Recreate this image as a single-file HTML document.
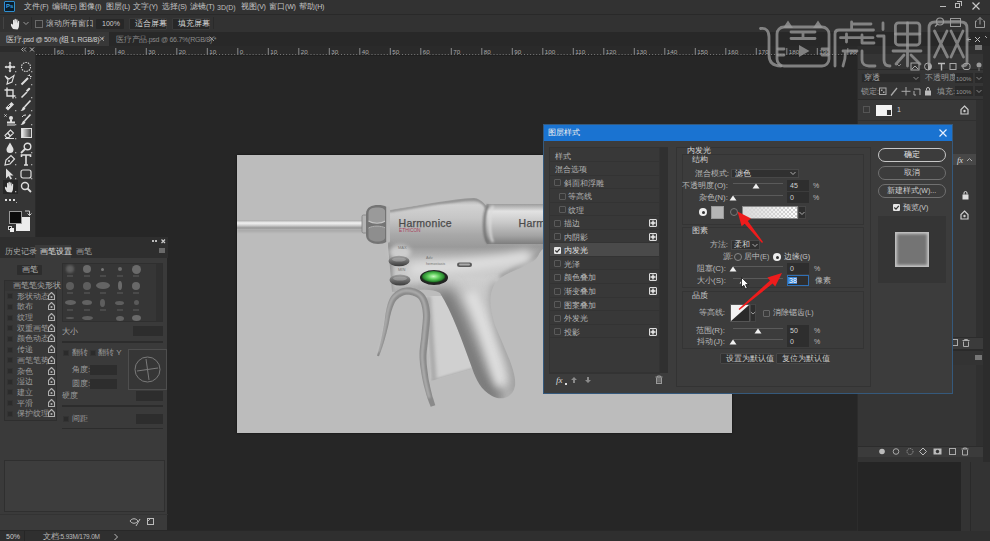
<!DOCTYPE html>
<html><head><meta charset="utf-8">
<style>
*{margin:0;padding:0;box-sizing:border-box}
html,body{width:990px;height:541px;overflow:hidden;background:#262626;font-family:"Liberation Sans",sans-serif}
.a{position:absolute}
.t{position:absolute;font-size:9px;line-height:10px;color:#bdbdbd;white-space:nowrap}
.z{letter-spacing:1.5px}
.m{font-size:8px;top:2px;color:#c4c4c4}
.mp{font-size:7px;letter-spacing:-.2px}
</style></head><body>


<!-- menu bar -->
<div class="a" style="left:0;top:0;width:990px;height:14px;background:#323232"></div>
<div class="a" style="left:4px;top:1px;width:11px;height:11px;background:#0a1d2c;border:1px solid #2f8fd0;border-radius:1px"></div>
<div class="t" style="left:6px;top:3px;font-size:6px;line-height:6px;color:#39a3e6;font-weight:bold">Ps</div>
<div class="t m" style="left:24px;top:2px">文件<span class="mp">(F)</span></div>
<div class="t m" style="left:52px;top:2px">编辑<span class="mp">(E)</span></div>
<div class="t m" style="left:79px;top:2px">图像<span class="mp">(I)</span></div>
<div class="t m" style="left:106px;top:2px">图层<span class="mp">(L)</span></div>
<div class="t m" style="left:133px;top:2px">文字<span class="mp">(Y)</span></div>
<div class="t m" style="left:162px;top:2px">选择<span class="mp">(S)</span></div>
<div class="t m" style="left:190px;top:2px">滤镜<span class="mp">(T)</span></div>
<div class="t" style="left:217px;top:3px;font-size:7px">3D(D)</div>
<div class="t m" style="left:241px;top:2px">视图<span class="mp">(V)</span></div>
<div class="t m" style="left:269px;top:2px">窗口<span class="mp">(W)</span></div>
<div class="t m" style="left:299px;top:2px">帮助<span class="mp">(H)</span></div>
<!-- window controls -->
<div class="a" style="left:940px;top:6px;width:6px;height:1px;background:#bbb"></div>
<div class="a" style="left:955px;top:3px;width:5px;height:5px;border:1px solid #bbb"></div>
<div class="a" style="left:957px;top:1px;width:5px;height:5px;border-top:1px solid #bbb;border-right:1px solid #bbb"></div>
<svg class="a" style="left:971px;top:1px" width="10" height="10"><path d="M1.5 1.5L8.5 8.5M8.5 1.5L1.5 8.5" stroke="#c8c8c8" stroke-width="1.2"/></svg>

<!-- options bar -->
<div class="a" style="left:0;top:14px;width:990px;height:18px;background:#323232;border-top:1px solid #292929"></div>
<div class="a" style="left:3px;top:17px;width:1px;height:12px;background:#444"></div>
<svg class="a" style="left:10px;top:18px" width="12" height="12" viewBox="0 0 12 12"><path d="M3 11 C1.5 9 0.5 7 1 6 C1.5 5.5 2.5 6 3 7 L3 2.5 C3 1.5 4.3 1.5 4.3 2.5 L4.3 5 L4.5 1.5 C4.5 0.5 5.9 0.5 5.9 1.5 L5.9 5 L6.2 2 C6.2 1 7.5 1 7.5 2 L7.5 5.5 L8 3.5 C8 2.6 9.2 2.6 9.2 3.5 L9 8 C8.8 10 8 11 7.5 11.5 Z" fill="#e6e6e6"/></svg>
<svg class="a" style="left:23px;top:21px" width="6" height="5"><path d="M0.5 1L3 3.5L5.5 1" stroke="#999" fill="none"/></svg>
<div class="a" style="left:31px;top:17px;width:1px;height:12px;background:#2a2a2a"></div>
<div class="a" style="left:35px;top:20px;width:8px;height:8px;border:1px solid #6a6a6a"></div>
<div class="t" style="left:46px;top:19px;font-size:8px">滚动所有窗口</div>
<div class="a" style="left:89px;top:17px;width:1px;height:12px;background:#2a2a2a"></div>
<div class="a" style="left:96px;top:19px;width:28px;height:10px;background:#272727;border-radius:1px"></div>
<div class="t" style="left:102px;top:19px;font-size:7px;color:#ccc">100%</div>
<div class="a" style="left:129px;top:18px;width:38px;height:12px;background:#272727;border:1px solid #3a3a3a;border-radius:1px"></div>
<div class="t" style="left:135px;top:19px;font-size:8px;color:#d6d6d6">适合屏幕</div>
<div class="a" style="left:172px;top:18px;width:38px;height:12px;background:#272727;border:1px solid #3a3a3a;border-radius:1px"></div>
<div class="t" style="left:178px;top:19px;font-size:8px;color:#d6d6d6">填充屏幕</div>
<div class="a" style="left:213px;top:17px;width:1px;height:12px;background:#2a2a2a"></div>
<svg class="a" style="left:934px;top:16px" width="30" height="14"><circle cx="6" cy="5.5" r="3.5" fill="none" stroke="#9a9a9a" stroke-width="1.2"/><path d="M3.5 8L1 10.5" stroke="#9a9a9a" stroke-width="1.3"/><rect x="16.5" y="2.5" width="10" height="8" fill="none" stroke="#9a9a9a"/><path d="M16.5 5H26.5" stroke="#9a9a9a"/></svg>
<svg class="a" style="left:973px;top:16px" width="14" height="13" viewBox="0 0 14 13"><path d="M4 5H2.5V11.5H11.5V5H10" stroke="#9a9a9a" fill="none"/><path d="M7 8.5V1.5M4.5 4L7 1.5L9.5 4" stroke="#9a9a9a" fill="none"/></svg>

<!-- tab bar -->
<div class="a" style="left:0;top:32px;width:990px;height:14px;background:#282828"></div>
<div class="a" style="left:0;top:32px;width:109px;height:14px;background:#383838"></div>
<div class="t" style="left:6px;top:35px;font-size:7px;color:#d0d0d0;letter-spacing:-.25px"><span style="font-size:8px">医疗</span>.psd @ 50% (<span style="font-size:8px">组</span> 1, RGB/8) *</div>
<svg class="a" style="left:98px;top:35px" width="8" height="8"><path d="M1.5 1.5L6 6M6 1.5L1.5 6" stroke="#9a9a9a"/></svg>
<div class="t" style="left:116px;top:35px;font-size:7px;color:#8a8a8a;letter-spacing:-.25px"><span style="font-size:8px">医疗产品</span>.psd @ 66.7%(RGB/8) *</div>
<svg class="a" style="left:208px;top:35px" width="8" height="8"><path d="M1.5 1.5L6 6M6 1.5L1.5 6" stroke="#9a9a9a"/></svg>
<svg class="a" style="left:966px;top:35px" width="22" height="9"><path d="M1 4.5H5M3 2.5L1 4.5L3 6.5" stroke="#aaa" fill="none"/><path d="M9 2L14 7M14 2L9 7" stroke="#bbb"/><path d="M19 1L21 3" stroke="#aaa"/></svg>
<!-- ruler -->
<div class="a" style="left:36px;top:46px;width:822px;height:10px;background:#2a2a2a;border-bottom:1px solid #1f1f1f"></div>
<svg class="a" style="left:36px;top:46px" width="822" height="10"><rect x="0.0" y="8" width="1" height="1" fill="#7a7a7a"/><rect x="3.1" y="8" width="1" height="1" fill="#7a7a7a"/><rect x="6.1" y="8" width="1" height="1" fill="#7a7a7a"/><rect x="9.2" y="8" width="1" height="1" fill="#7a7a7a"/><rect x="12.2" y="8" width="1" height="1" fill="#7a7a7a"/><rect x="15.3" y="8" width="1" height="1" fill="#7a7a7a"/><rect x="18.3" y="2" width="1" height="7" fill="#8a8a8a"/><text x="20.8" y="8" font-size="6.2" fill="#a8a8a8" font-family="Liberation Sans">60</text><rect x="21.4" y="8" width="1" height="1" fill="#7a7a7a"/><rect x="24.4" y="8" width="1" height="1" fill="#7a7a7a"/><rect x="27.5" y="8" width="1" height="1" fill="#7a7a7a"/><rect x="30.5" y="8" width="1" height="1" fill="#7a7a7a"/><rect x="33.6" y="8" width="1" height="1" fill="#7a7a7a"/><rect x="36.6" y="8" width="1" height="1" fill="#7a7a7a"/><rect x="39.7" y="8" width="1" height="1" fill="#7a7a7a"/><rect x="42.7" y="8" width="1" height="1" fill="#7a7a7a"/><rect x="45.8" y="8" width="1" height="1" fill="#7a7a7a"/><rect x="48.8" y="2" width="1" height="7" fill="#8a8a8a"/><text x="51.3" y="8" font-size="6.2" fill="#a8a8a8" font-family="Liberation Sans">50</text><rect x="51.9" y="8" width="1" height="1" fill="#7a7a7a"/><rect x="54.9" y="8" width="1" height="1" fill="#7a7a7a"/><rect x="58.0" y="8" width="1" height="1" fill="#7a7a7a"/><rect x="61.0" y="8" width="1" height="1" fill="#7a7a7a"/><rect x="64.1" y="8" width="1" height="1" fill="#7a7a7a"/><rect x="67.1" y="8" width="1" height="1" fill="#7a7a7a"/><rect x="70.2" y="8" width="1" height="1" fill="#7a7a7a"/><rect x="73.2" y="8" width="1" height="1" fill="#7a7a7a"/><rect x="76.3" y="8" width="1" height="1" fill="#7a7a7a"/><rect x="79.3" y="2" width="1" height="7" fill="#8a8a8a"/><text x="81.8" y="8" font-size="6.2" fill="#a8a8a8" font-family="Liberation Sans">40</text><rect x="82.4" y="8" width="1" height="1" fill="#7a7a7a"/><rect x="85.4" y="8" width="1" height="1" fill="#7a7a7a"/><rect x="88.5" y="8" width="1" height="1" fill="#7a7a7a"/><rect x="91.5" y="8" width="1" height="1" fill="#7a7a7a"/><rect x="94.6" y="8" width="1" height="1" fill="#7a7a7a"/><rect x="97.6" y="8" width="1" height="1" fill="#7a7a7a"/><rect x="100.7" y="8" width="1" height="1" fill="#7a7a7a"/><rect x="103.7" y="8" width="1" height="1" fill="#7a7a7a"/><rect x="106.8" y="8" width="1" height="1" fill="#7a7a7a"/><rect x="109.8" y="2" width="1" height="7" fill="#8a8a8a"/><text x="112.3" y="8" font-size="6.2" fill="#a8a8a8" font-family="Liberation Sans">30</text><rect x="112.9" y="8" width="1" height="1" fill="#7a7a7a"/><rect x="115.9" y="8" width="1" height="1" fill="#7a7a7a"/><rect x="119.0" y="8" width="1" height="1" fill="#7a7a7a"/><rect x="122.0" y="8" width="1" height="1" fill="#7a7a7a"/><rect x="125.1" y="8" width="1" height="1" fill="#7a7a7a"/><rect x="128.1" y="8" width="1" height="1" fill="#7a7a7a"/><rect x="131.2" y="8" width="1" height="1" fill="#7a7a7a"/><rect x="134.2" y="8" width="1" height="1" fill="#7a7a7a"/><rect x="137.2" y="8" width="1" height="1" fill="#7a7a7a"/><rect x="140.3" y="2" width="1" height="7" fill="#8a8a8a"/><text x="142.8" y="8" font-size="6.2" fill="#a8a8a8" font-family="Liberation Sans">20</text><rect x="143.4" y="8" width="1" height="1" fill="#7a7a7a"/><rect x="146.4" y="8" width="1" height="1" fill="#7a7a7a"/><rect x="149.5" y="8" width="1" height="1" fill="#7a7a7a"/><rect x="152.5" y="8" width="1" height="1" fill="#7a7a7a"/><rect x="155.6" y="8" width="1" height="1" fill="#7a7a7a"/><rect x="158.6" y="8" width="1" height="1" fill="#7a7a7a"/><rect x="161.7" y="8" width="1" height="1" fill="#7a7a7a"/><rect x="164.7" y="8" width="1" height="1" fill="#7a7a7a"/><rect x="167.8" y="8" width="1" height="1" fill="#7a7a7a"/><rect x="170.8" y="2" width="1" height="7" fill="#8a8a8a"/><text x="173.3" y="8" font-size="6.2" fill="#a8a8a8" font-family="Liberation Sans">10</text><rect x="173.9" y="8" width="1" height="1" fill="#7a7a7a"/><rect x="176.9" y="8" width="1" height="1" fill="#7a7a7a"/><rect x="180.0" y="8" width="1" height="1" fill="#7a7a7a"/><rect x="183.0" y="8" width="1" height="1" fill="#7a7a7a"/><rect x="186.1" y="8" width="1" height="1" fill="#7a7a7a"/><rect x="189.1" y="8" width="1" height="1" fill="#7a7a7a"/><rect x="192.2" y="8" width="1" height="1" fill="#7a7a7a"/><rect x="195.2" y="8" width="1" height="1" fill="#7a7a7a"/><rect x="198.2" y="8" width="1" height="1" fill="#7a7a7a"/><rect x="201.3" y="2" width="1" height="7" fill="#8a8a8a"/><text x="203.8" y="8" font-size="6.2" fill="#a8a8a8" font-family="Liberation Sans">0</text><rect x="204.4" y="8" width="1" height="1" fill="#7a7a7a"/><rect x="207.4" y="8" width="1" height="1" fill="#7a7a7a"/><rect x="210.5" y="8" width="1" height="1" fill="#7a7a7a"/><rect x="213.5" y="8" width="1" height="1" fill="#7a7a7a"/><rect x="216.6" y="8" width="1" height="1" fill="#7a7a7a"/><rect x="219.6" y="8" width="1" height="1" fill="#7a7a7a"/><rect x="222.7" y="8" width="1" height="1" fill="#7a7a7a"/><rect x="225.7" y="8" width="1" height="1" fill="#7a7a7a"/><rect x="228.8" y="8" width="1" height="1" fill="#7a7a7a"/><rect x="231.8" y="2" width="1" height="7" fill="#8a8a8a"/><text x="234.3" y="8" font-size="6.2" fill="#a8a8a8" font-family="Liberation Sans">10</text><rect x="234.9" y="8" width="1" height="1" fill="#7a7a7a"/><rect x="237.9" y="8" width="1" height="1" fill="#7a7a7a"/><rect x="241.0" y="8" width="1" height="1" fill="#7a7a7a"/><rect x="244.0" y="8" width="1" height="1" fill="#7a7a7a"/><rect x="247.1" y="8" width="1" height="1" fill="#7a7a7a"/><rect x="250.1" y="8" width="1" height="1" fill="#7a7a7a"/><rect x="253.2" y="8" width="1" height="1" fill="#7a7a7a"/><rect x="256.2" y="8" width="1" height="1" fill="#7a7a7a"/><rect x="259.2" y="8" width="1" height="1" fill="#7a7a7a"/><rect x="262.3" y="2" width="1" height="7" fill="#8a8a8a"/><text x="264.8" y="8" font-size="6.2" fill="#a8a8a8" font-family="Liberation Sans">20</text><rect x="265.4" y="8" width="1" height="1" fill="#7a7a7a"/><rect x="268.4" y="8" width="1" height="1" fill="#7a7a7a"/><rect x="271.4" y="8" width="1" height="1" fill="#7a7a7a"/><rect x="274.5" y="8" width="1" height="1" fill="#7a7a7a"/><rect x="277.6" y="8" width="1" height="1" fill="#7a7a7a"/><rect x="280.6" y="8" width="1" height="1" fill="#7a7a7a"/><rect x="283.7" y="8" width="1" height="1" fill="#7a7a7a"/><rect x="286.7" y="8" width="1" height="1" fill="#7a7a7a"/><rect x="289.8" y="8" width="1" height="1" fill="#7a7a7a"/><rect x="292.8" y="2" width="1" height="7" fill="#8a8a8a"/><text x="295.3" y="8" font-size="6.2" fill="#a8a8a8" font-family="Liberation Sans">30</text><rect x="295.9" y="8" width="1" height="1" fill="#7a7a7a"/><rect x="298.9" y="8" width="1" height="1" fill="#7a7a7a"/><rect x="301.9" y="8" width="1" height="1" fill="#7a7a7a"/><rect x="305.0" y="8" width="1" height="1" fill="#7a7a7a"/><rect x="308.1" y="8" width="1" height="1" fill="#7a7a7a"/><rect x="311.1" y="8" width="1" height="1" fill="#7a7a7a"/><rect x="314.2" y="8" width="1" height="1" fill="#7a7a7a"/><rect x="317.2" y="8" width="1" height="1" fill="#7a7a7a"/><rect x="320.2" y="8" width="1" height="1" fill="#7a7a7a"/><rect x="323.3" y="2" width="1" height="7" fill="#8a8a8a"/><text x="325.8" y="8" font-size="6.2" fill="#a8a8a8" font-family="Liberation Sans">40</text><rect x="326.4" y="8" width="1" height="1" fill="#7a7a7a"/><rect x="329.4" y="8" width="1" height="1" fill="#7a7a7a"/><rect x="332.4" y="8" width="1" height="1" fill="#7a7a7a"/><rect x="335.5" y="8" width="1" height="1" fill="#7a7a7a"/><rect x="338.6" y="8" width="1" height="1" fill="#7a7a7a"/><rect x="341.6" y="8" width="1" height="1" fill="#7a7a7a"/><rect x="344.7" y="8" width="1" height="1" fill="#7a7a7a"/><rect x="347.7" y="8" width="1" height="1" fill="#7a7a7a"/><rect x="350.8" y="8" width="1" height="1" fill="#7a7a7a"/><rect x="353.8" y="2" width="1" height="7" fill="#8a8a8a"/><text x="356.3" y="8" font-size="6.2" fill="#a8a8a8" font-family="Liberation Sans">50</text><rect x="356.9" y="8" width="1" height="1" fill="#7a7a7a"/><rect x="359.9" y="8" width="1" height="1" fill="#7a7a7a"/><rect x="362.9" y="8" width="1" height="1" fill="#7a7a7a"/><rect x="366.0" y="8" width="1" height="1" fill="#7a7a7a"/><rect x="369.1" y="8" width="1" height="1" fill="#7a7a7a"/><rect x="372.1" y="8" width="1" height="1" fill="#7a7a7a"/><rect x="375.2" y="8" width="1" height="1" fill="#7a7a7a"/><rect x="378.2" y="8" width="1" height="1" fill="#7a7a7a"/><rect x="381.2" y="8" width="1" height="1" fill="#7a7a7a"/><rect x="384.3" y="2" width="1" height="7" fill="#8a8a8a"/><text x="386.8" y="8" font-size="6.2" fill="#a8a8a8" font-family="Liberation Sans">60</text><rect x="387.4" y="8" width="1" height="1" fill="#7a7a7a"/><rect x="390.4" y="8" width="1" height="1" fill="#7a7a7a"/><rect x="393.4" y="8" width="1" height="1" fill="#7a7a7a"/><rect x="396.5" y="8" width="1" height="1" fill="#7a7a7a"/><rect x="399.6" y="8" width="1" height="1" fill="#7a7a7a"/><rect x="402.6" y="8" width="1" height="1" fill="#7a7a7a"/><rect x="405.7" y="8" width="1" height="1" fill="#7a7a7a"/><rect x="408.7" y="8" width="1" height="1" fill="#7a7a7a"/><rect x="411.8" y="8" width="1" height="1" fill="#7a7a7a"/><rect x="414.8" y="2" width="1" height="7" fill="#8a8a8a"/><text x="417.3" y="8" font-size="6.2" fill="#a8a8a8" font-family="Liberation Sans">70</text><rect x="417.9" y="8" width="1" height="1" fill="#7a7a7a"/><rect x="420.9" y="8" width="1" height="1" fill="#7a7a7a"/><rect x="423.9" y="8" width="1" height="1" fill="#7a7a7a"/><rect x="427.0" y="8" width="1" height="1" fill="#7a7a7a"/><rect x="430.1" y="8" width="1" height="1" fill="#7a7a7a"/><rect x="433.1" y="8" width="1" height="1" fill="#7a7a7a"/><rect x="436.2" y="8" width="1" height="1" fill="#7a7a7a"/><rect x="439.2" y="8" width="1" height="1" fill="#7a7a7a"/><rect x="442.2" y="8" width="1" height="1" fill="#7a7a7a"/><rect x="445.3" y="2" width="1" height="7" fill="#8a8a8a"/><text x="447.8" y="8" font-size="6.2" fill="#a8a8a8" font-family="Liberation Sans">80</text><rect x="448.4" y="8" width="1" height="1" fill="#7a7a7a"/><rect x="451.4" y="8" width="1" height="1" fill="#7a7a7a"/><rect x="454.4" y="8" width="1" height="1" fill="#7a7a7a"/><rect x="457.5" y="8" width="1" height="1" fill="#7a7a7a"/><rect x="460.6" y="8" width="1" height="1" fill="#7a7a7a"/><rect x="463.6" y="8" width="1" height="1" fill="#7a7a7a"/><rect x="466.7" y="8" width="1" height="1" fill="#7a7a7a"/><rect x="469.7" y="8" width="1" height="1" fill="#7a7a7a"/><rect x="472.8" y="8" width="1" height="1" fill="#7a7a7a"/><rect x="475.8" y="2" width="1" height="7" fill="#8a8a8a"/><text x="478.3" y="8" font-size="6.2" fill="#a8a8a8" font-family="Liberation Sans">90</text><rect x="478.9" y="8" width="1" height="1" fill="#7a7a7a"/><rect x="481.9" y="8" width="1" height="1" fill="#7a7a7a"/><rect x="484.9" y="8" width="1" height="1" fill="#7a7a7a"/><rect x="488.0" y="8" width="1" height="1" fill="#7a7a7a"/><rect x="491.1" y="8" width="1" height="1" fill="#7a7a7a"/><rect x="494.1" y="8" width="1" height="1" fill="#7a7a7a"/><rect x="497.2" y="8" width="1" height="1" fill="#7a7a7a"/><rect x="500.2" y="8" width="1" height="1" fill="#7a7a7a"/><rect x="503.2" y="8" width="1" height="1" fill="#7a7a7a"/><rect x="506.3" y="2" width="1" height="7" fill="#8a8a8a"/><text x="508.8" y="8" font-size="6.2" fill="#a8a8a8" font-family="Liberation Sans">100</text><rect x="509.3" y="8" width="1" height="1" fill="#7a7a7a"/><rect x="512.4" y="8" width="1" height="1" fill="#7a7a7a"/><rect x="515.4" y="8" width="1" height="1" fill="#7a7a7a"/><rect x="518.5" y="8" width="1" height="1" fill="#7a7a7a"/><rect x="521.5" y="8" width="1" height="1" fill="#7a7a7a"/><rect x="524.6" y="8" width="1" height="1" fill="#7a7a7a"/><rect x="527.6" y="8" width="1" height="1" fill="#7a7a7a"/><rect x="530.7" y="8" width="1" height="1" fill="#7a7a7a"/><rect x="533.8" y="8" width="1" height="1" fill="#7a7a7a"/><rect x="536.8" y="2" width="1" height="7" fill="#8a8a8a"/><text x="539.3" y="8" font-size="6.2" fill="#a8a8a8" font-family="Liberation Sans">110</text><rect x="539.8" y="8" width="1" height="1" fill="#7a7a7a"/><rect x="542.9" y="8" width="1" height="1" fill="#7a7a7a"/><rect x="545.9" y="8" width="1" height="1" fill="#7a7a7a"/><rect x="549.0" y="8" width="1" height="1" fill="#7a7a7a"/><rect x="552.0" y="8" width="1" height="1" fill="#7a7a7a"/><rect x="555.1" y="8" width="1" height="1" fill="#7a7a7a"/><rect x="558.1" y="8" width="1" height="1" fill="#7a7a7a"/><rect x="561.2" y="8" width="1" height="1" fill="#7a7a7a"/><rect x="564.2" y="8" width="1" height="1" fill="#7a7a7a"/><rect x="567.3" y="2" width="1" height="7" fill="#8a8a8a"/><text x="569.8" y="8" font-size="6.2" fill="#a8a8a8" font-family="Liberation Sans">120</text><rect x="570.3" y="8" width="1" height="1" fill="#7a7a7a"/><rect x="573.4" y="8" width="1" height="1" fill="#7a7a7a"/><rect x="576.4" y="8" width="1" height="1" fill="#7a7a7a"/><rect x="579.5" y="8" width="1" height="1" fill="#7a7a7a"/><rect x="582.5" y="8" width="1" height="1" fill="#7a7a7a"/><rect x="585.6" y="8" width="1" height="1" fill="#7a7a7a"/><rect x="588.6" y="8" width="1" height="1" fill="#7a7a7a"/><rect x="591.7" y="8" width="1" height="1" fill="#7a7a7a"/><rect x="594.8" y="8" width="1" height="1" fill="#7a7a7a"/><rect x="597.8" y="2" width="1" height="7" fill="#8a8a8a"/><text x="600.3" y="8" font-size="6.2" fill="#a8a8a8" font-family="Liberation Sans">130</text><rect x="600.8" y="8" width="1" height="1" fill="#7a7a7a"/><rect x="603.9" y="8" width="1" height="1" fill="#7a7a7a"/><rect x="606.9" y="8" width="1" height="1" fill="#7a7a7a"/><rect x="610.0" y="8" width="1" height="1" fill="#7a7a7a"/><rect x="613.0" y="8" width="1" height="1" fill="#7a7a7a"/><rect x="616.1" y="8" width="1" height="1" fill="#7a7a7a"/><rect x="619.1" y="8" width="1" height="1" fill="#7a7a7a"/><rect x="622.2" y="8" width="1" height="1" fill="#7a7a7a"/><rect x="625.2" y="8" width="1" height="1" fill="#7a7a7a"/><rect x="628.3" y="2" width="1" height="7" fill="#8a8a8a"/><text x="630.8" y="8" font-size="6.2" fill="#a8a8a8" font-family="Liberation Sans">140</text><rect x="631.3" y="8" width="1" height="1" fill="#7a7a7a"/><rect x="634.4" y="8" width="1" height="1" fill="#7a7a7a"/><rect x="637.4" y="8" width="1" height="1" fill="#7a7a7a"/><rect x="640.5" y="8" width="1" height="1" fill="#7a7a7a"/><rect x="643.5" y="8" width="1" height="1" fill="#7a7a7a"/><rect x="646.6" y="8" width="1" height="1" fill="#7a7a7a"/><rect x="649.6" y="8" width="1" height="1" fill="#7a7a7a"/><rect x="652.7" y="8" width="1" height="1" fill="#7a7a7a"/><rect x="655.8" y="8" width="1" height="1" fill="#7a7a7a"/><rect x="658.8" y="2" width="1" height="7" fill="#8a8a8a"/><text x="661.3" y="8" font-size="6.2" fill="#a8a8a8" font-family="Liberation Sans">150</text><rect x="661.8" y="8" width="1" height="1" fill="#7a7a7a"/><rect x="664.9" y="8" width="1" height="1" fill="#7a7a7a"/><rect x="667.9" y="8" width="1" height="1" fill="#7a7a7a"/><rect x="671.0" y="8" width="1" height="1" fill="#7a7a7a"/><rect x="674.0" y="8" width="1" height="1" fill="#7a7a7a"/><rect x="677.1" y="8" width="1" height="1" fill="#7a7a7a"/><rect x="680.1" y="8" width="1" height="1" fill="#7a7a7a"/><rect x="683.2" y="8" width="1" height="1" fill="#7a7a7a"/><rect x="686.2" y="8" width="1" height="1" fill="#7a7a7a"/><rect x="689.3" y="2" width="1" height="7" fill="#8a8a8a"/><text x="691.8" y="8" font-size="6.2" fill="#a8a8a8" font-family="Liberation Sans">160</text><rect x="692.3" y="8" width="1" height="1" fill="#7a7a7a"/><rect x="695.4" y="8" width="1" height="1" fill="#7a7a7a"/><rect x="698.4" y="8" width="1" height="1" fill="#7a7a7a"/><rect x="701.5" y="8" width="1" height="1" fill="#7a7a7a"/><rect x="704.5" y="8" width="1" height="1" fill="#7a7a7a"/><rect x="707.6" y="8" width="1" height="1" fill="#7a7a7a"/><rect x="710.6" y="8" width="1" height="1" fill="#7a7a7a"/><rect x="713.7" y="8" width="1" height="1" fill="#7a7a7a"/><rect x="716.8" y="8" width="1" height="1" fill="#7a7a7a"/><rect x="719.8" y="2" width="1" height="7" fill="#8a8a8a"/><text x="722.3" y="8" font-size="6.2" fill="#a8a8a8" font-family="Liberation Sans">170</text><rect x="722.8" y="8" width="1" height="1" fill="#7a7a7a"/><rect x="725.9" y="8" width="1" height="1" fill="#7a7a7a"/><rect x="728.9" y="8" width="1" height="1" fill="#7a7a7a"/><rect x="732.0" y="8" width="1" height="1" fill="#7a7a7a"/><rect x="735.0" y="8" width="1" height="1" fill="#7a7a7a"/><rect x="738.1" y="8" width="1" height="1" fill="#7a7a7a"/><rect x="741.1" y="8" width="1" height="1" fill="#7a7a7a"/><rect x="744.2" y="8" width="1" height="1" fill="#7a7a7a"/><rect x="747.2" y="8" width="1" height="1" fill="#7a7a7a"/><rect x="750.3" y="2" width="1" height="7" fill="#8a8a8a"/><text x="752.8" y="8" font-size="6.2" fill="#a8a8a8" font-family="Liberation Sans">180</text><rect x="753.3" y="8" width="1" height="1" fill="#7a7a7a"/><rect x="756.4" y="8" width="1" height="1" fill="#7a7a7a"/><rect x="759.4" y="8" width="1" height="1" fill="#7a7a7a"/><rect x="762.5" y="8" width="1" height="1" fill="#7a7a7a"/><rect x="765.5" y="8" width="1" height="1" fill="#7a7a7a"/><rect x="768.6" y="8" width="1" height="1" fill="#7a7a7a"/><rect x="771.6" y="8" width="1" height="1" fill="#7a7a7a"/><rect x="774.7" y="8" width="1" height="1" fill="#7a7a7a"/><rect x="777.8" y="8" width="1" height="1" fill="#7a7a7a"/><rect x="780.8" y="2" width="1" height="7" fill="#8a8a8a"/><text x="783.3" y="8" font-size="6.2" fill="#a8a8a8" font-family="Liberation Sans">190</text><rect x="783.8" y="8" width="1" height="1" fill="#7a7a7a"/><rect x="786.9" y="8" width="1" height="1" fill="#7a7a7a"/><rect x="789.9" y="8" width="1" height="1" fill="#7a7a7a"/><rect x="793.0" y="8" width="1" height="1" fill="#7a7a7a"/><rect x="796.0" y="8" width="1" height="1" fill="#7a7a7a"/><rect x="799.1" y="8" width="1" height="1" fill="#7a7a7a"/><rect x="802.1" y="8" width="1" height="1" fill="#7a7a7a"/><rect x="805.2" y="8" width="1" height="1" fill="#7a7a7a"/><rect x="808.2" y="8" width="1" height="1" fill="#7a7a7a"/><rect x="811.3" y="2" width="1" height="7" fill="#8a8a8a"/><text x="813.8" y="8" font-size="6.2" fill="#a8a8a8" font-family="Liberation Sans">200</text><rect x="814.3" y="8" width="1" height="1" fill="#7a7a7a"/><rect x="817.4" y="8" width="1" height="1" fill="#7a7a7a"/><rect x="820.4" y="8" width="1" height="1" fill="#7a7a7a"/></svg>
<!-- toolbar -->
<div class="a" style="left:0;top:46px;width:36px;height:191px;background:#353535;border-right:1px solid #2a2a2a"></div>
<div class="a" style="left:0;top:46px;width:36px;height:6px;background:#2c2c2c"></div>
<svg class="a" style="left:20px;top:46px" width="16" height="7"><path d="M3.5 1.5L1.5 3.5L3.5 5.5M6 1.5L4 3.5L6 5.5" stroke="#aaa" fill="none"/><path d="M10 1.5L14 5.5M14 1.5L10 5.5" stroke="#bbb"/></svg>
<svg class="a" style="left:4px;top:61px" width="14" height="13" viewBox="0 0 14 13"><path d="M6 1.5V10.5M1.5 6H10.5" stroke="#dedede" stroke-width="1.3"/><circle cx="6" cy="6" r="1.8" fill="#dedede"/><path d="M6 0.5L4.5 2.5H7.5ZM6 11.5L4.5 9.5H7.5ZM0.5 6L2.5 4.5V7.5ZM11.5 6L9.5 4.5V7.5Z" fill="#dedede"/><rect x="11" y="10" width="1.3" height="1.3" fill="#aaa"/></svg>
<svg class="a" style="left:20px;top:61px" width="14" height="13" viewBox="0 0 14 13"><circle cx="6" cy="6" r="4.5" stroke="#dedede" stroke-width="1.1" stroke-dasharray="1.5 1" fill="none"/><rect x="11" y="10" width="1.3" height="1.3" fill="#aaa"/></svg>
<svg class="a" style="left:4px;top:74px" width="14" height="13" viewBox="0 0 14 13"><path d="M1 2L5 5L10 1.5L8 8L3 10L4 6Z" stroke="#dedede" stroke-width="1.1" fill="none"/><rect x="11" y="10" width="1.3" height="1.3" fill="#aaa"/></svg>
<svg class="a" style="left:20px;top:74px" width="14" height="13" viewBox="0 0 14 13"><path d="M1.5 10.5L8 4" stroke="#dedede" stroke-width="2"/><path d="M9.5 0.5V2M11.5 2.5H10M8 1L8.5 2M11 4.5L10 4" stroke="#dedede"/><rect x="11" y="10" width="1.3" height="1.3" fill="#aaa"/></svg>
<svg class="a" style="left:4px;top:87px" width="14" height="13" viewBox="0 0 14 13"><path d="M3 0.5V9H11.5M0.5 3H9V11.5" stroke="#dedede" stroke-width="1.4" fill="none"/><rect x="11" y="10" width="1.3" height="1.3" fill="#aaa"/></svg>
<svg class="a" style="left:20px;top:87px" width="14" height="13" viewBox="0 0 14 13"><path d="M1.5 10.5L7 5" stroke="#dedede" stroke-width="1.6"/><path d="M6 3.5L8.5 1C9.5 0 11 1.5 10 2.5L7.5 5Z" fill="#dedede"/><rect x="11" y="10" width="1.3" height="1.3" fill="#aaa"/></svg>
<svg class="a" style="left:4px;top:100px" width="14" height="13" viewBox="0 0 14 13"><path d="M1.5 8L7.5 2L10 4.5L4 10.5Z" fill="#dedede"/><path d="M4 7L6 5" stroke="#333"/><rect x="11" y="10" width="1.3" height="1.3" fill="#aaa"/></svg>
<svg class="a" style="left:20px;top:100px" width="14" height="13" viewBox="0 0 14 13"><path d="M10.5 0.5L4.5 7" stroke="#dedede" stroke-width="1.6"/><path d="M4 6.5C2 7 2.5 9.5 0.5 11C3 11 5 10 5.5 8Z" fill="#dedede"/><rect x="11" y="10" width="1.3" height="1.3" fill="#aaa"/></svg>
<svg class="a" style="left:4px;top:114px" width="14" height="13" viewBox="0 0 14 13"><path d="M0.5 0.5L2.5 2.5M2.5 0.5L0.5 2.5" stroke="#dedede"/><circle cx="7" cy="4" r="2" fill="#dedede"/><path d="M6 5.5H8V7.5H11V9.5H3V7.5H6Z" fill="#dedede"/><rect x="3" y="10.5" width="8" height="1" fill="#dedede"/><rect x="11" y="10" width="1.3" height="1.3" fill="#aaa"/></svg>
<svg class="a" style="left:20px;top:114px" width="14" height="13" viewBox="0 0 14 13"><path d="M10.5 0.5L4.5 7" stroke="#dedede" stroke-width="1.6"/><path d="M4 6.5C2 7 2.5 9.5 0.5 11C3 11 5 10 5.5 8Z" fill="#dedede"/><path d="M2 3A4 4 0 0 1 6 1" stroke="#dedede" fill="none"/><rect x="11" y="10" width="1.3" height="1.3" fill="#aaa"/></svg>
<svg class="a" style="left:4px;top:128px" width="14" height="13" viewBox="0 0 14 13"><path d="M1 7.5L6.5 2L9.5 5L5 9.5H2.5Z" stroke="#dedede" stroke-width="1.1" fill="none"/><path d="M1 10.5H10" stroke="#dedede"/><path d="M3.5 5L6.5 8" stroke="#dedede" stroke-width="1.5"/><rect x="11" y="10" width="1.3" height="1.3" fill="#aaa"/></svg>
<div class="a" style="left:21px;top:128px;width:11px;height:10px;border:1px solid #ddd;background:linear-gradient(90deg,#eee,#444)"></div>
<svg class="a" style="left:4px;top:142px" width="14" height="13" viewBox="0 0 14 13"><path d="M6 0.5C4.5 3.5 2.5 5.5 2.5 7.5A3.5 3.5 0 0 0 9.5 7.5C9.5 5.5 7.5 3.5 6 0.5Z" fill="#dedede"/><rect x="11" y="10" width="1.3" height="1.3" fill="#aaa"/></svg>
<svg class="a" style="left:20px;top:142px" width="14" height="13" viewBox="0 0 14 13"><circle cx="7.5" cy="4.5" r="3.3" fill="none" stroke="#dedede" stroke-width="1.4"/><path d="M5 7L1 11" stroke="#dedede" stroke-width="1.8"/><rect x="11" y="10" width="1.3" height="1.3" fill="#aaa"/></svg>
<svg class="a" style="left:4px;top:154px" width="14" height="13" viewBox="0 0 14 13"><path d="M1 11L2 6L7 1.5L10.5 5L6 10Z" stroke="#dedede" stroke-width="1.2" fill="none"/><circle cx="5" cy="7" r="1" fill="#dedede"/><rect x="11" y="10" width="1.3" height="1.3" fill="#aaa"/></svg>
<svg class="a" style="left:20px;top:154px" width="14" height="13" viewBox="0 0 14 13"><path d="M1.5 3V1H10.5V3M6 1V11M4 11H8" stroke="#dedede" stroke-width="1.6" fill="none"/><rect x="11" y="10" width="1.3" height="1.3" fill="#aaa"/></svg>
<svg class="a" style="left:4px;top:168px" width="14" height="13" viewBox="0 0 14 13"><path d="M2 0.5V10.5L4.5 8L6.5 11.5L8 10.5L6 7.5H9.5Z" fill="#dedede"/><rect x="11" y="10" width="1.3" height="1.3" fill="#aaa"/></svg>
<svg class="a" style="left:20px;top:168px" width="14" height="13" viewBox="0 0 14 13"><rect x="1" y="2" width="10" height="8" rx="2" fill="none" stroke="#dedede" stroke-width="1.2"/><rect x="11" y="10" width="1.3" height="1.3" fill="#aaa"/></svg>
<div class="a" style="left:3px;top:180px;width:15px;height:14px;background:#262626"></div>
<svg class="a" style="left:4px;top:181px" width="14" height="13" viewBox="0 0 14 13"><path d="M3 11 C1.5 9 0.5 7 1 6 C1.5 5.5 2.5 6 3 7 L3 2.5 C3 1.5 4.3 1.5 4.3 2.5 L4.3 5 L4.5 1.5 C4.5 0.5 5.9 0.5 5.9 1.5 L5.9 5 L6.2 2 C6.2 1 7.5 1 7.5 2 L7.5 5.5 L8 3.5 C8 2.6 9.2 2.6 9.2 3.5 L9 8 C8.8 10 8 11 7.5 11.5 Z" fill="#dedede"/><rect x="11" y="10" width="1.3" height="1.3" fill="#aaa"/></svg>
<svg class="a" style="left:20px;top:181px" width="14" height="13" viewBox="0 0 14 13"><circle cx="5" cy="5" r="3.5" fill="none" stroke="#dedede" stroke-width="1.4"/><path d="M7.5 7.5L11 11" stroke="#dedede" stroke-width="1.8"/></svg>
<div class="a" style="left:5px;top:199px;width:2px;height:2px;background:#ddd"></div><div class="a" style="left:9px;top:199px;width:2px;height:2px;background:#ddd"></div><div class="a" style="left:13px;top:199px;width:2px;height:2px;background:#ddd"></div><div class="a" style="left:16px;top:202px;width:1px;height:1px;background:#aaa"></div>
<div class="a" style="left:16px;top:217px;width:14px;height:14px;background:#ececec"></div>
<div class="a" style="left:9px;top:211px;width:13px;height:13px;background:#0c0c0c;border:1px solid #9a9a9a"></div>
<svg class="a" style="left:24px;top:209px" width="8" height="8"><path d="M1 2H5.5V6.5M3.5 4.5L5.5 6.5L7.5 4.5" stroke="#ccc" fill="none"/></svg>
<div class="a" style="left:8px;top:226px;width:4px;height:4px;background:#111;border:1px solid #ccc"></div>
<div class="a" style="left:10px;top:228px;width:4px;height:4px;background:#eee"></div>
<!-- brush panel -->
<div class="a" style="left:0;top:237px;width:168px;height:293px;background:#3a3a3a;border-right:1px solid #262626"></div>
<div class="a" style="left:0;top:237px;width:168px;height:21px;background:#2e2e2e"></div>
<svg class="a" style="left:150px;top:238px" width="18" height="7"><rect x="2" y="2" width="2" height="2" fill="#bbb"/><rect x="5" y="2" width="2" height="2" fill="#bbb"/><path d="M11.5 1.5L15 5M15 1.5L11.5 5" stroke="#ccc" stroke-width="1.2"/></svg>
<div class="a" style="left:35px;top:245px;width:36px;height:13px;background:#3a3a3a"></div>
<div class="t" style="left:5px;top:247px;font-size:8px;color:#aaa">历史记录</div>
<div class="t" style="left:40px;top:247px;font-size:8px;color:#e0e0e0">画笔设置</div>
<div class="t" style="left:76px;top:247px;font-size:8px;color:#aaa">画笔</div>
<div class="a" style="left:159px;top:248px;width:6px;height:5px;background:#6a6a6a"></div>
<div class="a" style="left:17px;top:265px;width:25px;height:10px;background:#2d2d2d;border-radius:1px"></div>
<div class="t" style="left:22px;top:265px;font-size:8px;color:#bbb">画笔</div>
<div class="a" style="left:4px;top:280px;width:53px;height:141px;background:#383838;border:1px solid #2e2e2e"></div>
<div class="a" style="left:5px;top:281px;width:51px;height:10px;background:#343434"></div>
<div class="t" style="left:13px;top:281px;font-size:8px;color:#aaa">画笔笔尖形状</div>
<div class="a" style="left:7px;top:293.1px;width:6px;height:6px;background:#2b2b2b;border:1px solid #333"></div>
<div class="t" style="left:17px;top:291.6px;font-size:8px;color:#9c9c9c">形状动态</div>
<svg class="a" style="left:48px;top:291.6px" width="7" height="8"><path d="M3.5 0.5L6.5 3.5V7.5H0.5V3.5Z" fill="none" stroke="#b0b0b0" stroke-width="1.1" stroke-linejoin="round"/><circle cx="3.5" cy="5" r="1.1" fill="#b0b0b0"/></svg>
<div class="a" style="left:7px;top:303.8px;width:6px;height:6px;background:#2b2b2b;border:1px solid #333"></div>
<div class="t" style="left:17px;top:302.3px;font-size:8px;color:#9c9c9c">散布</div>
<svg class="a" style="left:48px;top:302.3px" width="7" height="8"><path d="M3.5 0.5L6.5 3.5V7.5H0.5V3.5Z" fill="none" stroke="#b0b0b0" stroke-width="1.1" stroke-linejoin="round"/><circle cx="3.5" cy="5" r="1.1" fill="#b0b0b0"/></svg>
<div class="a" style="left:7px;top:314.5px;width:6px;height:6px;background:#2b2b2b;border:1px solid #333"></div>
<div class="t" style="left:17px;top:313.0px;font-size:8px;color:#9c9c9c">纹理</div>
<svg class="a" style="left:48px;top:313.0px" width="7" height="8"><path d="M3.5 0.5L6.5 3.5V7.5H0.5V3.5Z" fill="none" stroke="#b0b0b0" stroke-width="1.1" stroke-linejoin="round"/><circle cx="3.5" cy="5" r="1.1" fill="#b0b0b0"/></svg>
<div class="a" style="left:7px;top:325.2px;width:6px;height:6px;background:#2b2b2b;border:1px solid #333"></div>
<div class="t" style="left:17px;top:323.7px;font-size:8px;color:#9c9c9c">双重画笔</div>
<svg class="a" style="left:48px;top:323.7px" width="7" height="8"><path d="M3.5 0.5L6.5 3.5V7.5H0.5V3.5Z" fill="none" stroke="#b0b0b0" stroke-width="1.1" stroke-linejoin="round"/><circle cx="3.5" cy="5" r="1.1" fill="#b0b0b0"/></svg>
<div class="a" style="left:7px;top:335.9px;width:6px;height:6px;background:#2b2b2b;border:1px solid #333"></div>
<div class="t" style="left:17px;top:334.4px;font-size:8px;color:#9c9c9c">颜色动态</div>
<svg class="a" style="left:48px;top:334.4px" width="7" height="8"><path d="M3.5 0.5L6.5 3.5V7.5H0.5V3.5Z" fill="none" stroke="#b0b0b0" stroke-width="1.1" stroke-linejoin="round"/><circle cx="3.5" cy="5" r="1.1" fill="#b0b0b0"/></svg>
<div class="a" style="left:7px;top:346.6px;width:6px;height:6px;background:#2b2b2b;border:1px solid #333"></div>
<div class="t" style="left:17px;top:345.1px;font-size:8px;color:#9c9c9c">传递</div>
<svg class="a" style="left:48px;top:345.1px" width="7" height="8"><path d="M3.5 0.5L6.5 3.5V7.5H0.5V3.5Z" fill="none" stroke="#b0b0b0" stroke-width="1.1" stroke-linejoin="round"/><circle cx="3.5" cy="5" r="1.1" fill="#b0b0b0"/></svg>
<div class="a" style="left:7px;top:357.3px;width:6px;height:6px;background:#2b2b2b;border:1px solid #333"></div>
<div class="t" style="left:17px;top:355.8px;font-size:8px;color:#9c9c9c">画笔笔势</div>
<svg class="a" style="left:48px;top:355.8px" width="7" height="8"><path d="M3.5 0.5L6.5 3.5V7.5H0.5V3.5Z" fill="none" stroke="#b0b0b0" stroke-width="1.1" stroke-linejoin="round"/><circle cx="3.5" cy="5" r="1.1" fill="#b0b0b0"/></svg>
<div class="a" style="left:7px;top:368.0px;width:6px;height:6px;background:#2b2b2b;border:1px solid #333"></div>
<div class="t" style="left:17px;top:366.5px;font-size:8px;color:#9c9c9c">杂色</div>
<svg class="a" style="left:48px;top:366.5px" width="7" height="8"><path d="M3.5 0.5L6.5 3.5V7.5H0.5V3.5Z" fill="none" stroke="#b0b0b0" stroke-width="1.1" stroke-linejoin="round"/><circle cx="3.5" cy="5" r="1.1" fill="#b0b0b0"/></svg>
<div class="a" style="left:7px;top:378.7px;width:6px;height:6px;background:#2b2b2b;border:1px solid #333"></div>
<div class="t" style="left:17px;top:377.2px;font-size:8px;color:#9c9c9c">湿边</div>
<svg class="a" style="left:48px;top:377.2px" width="7" height="8"><path d="M3.5 0.5L6.5 3.5V7.5H0.5V3.5Z" fill="none" stroke="#b0b0b0" stroke-width="1.1" stroke-linejoin="round"/><circle cx="3.5" cy="5" r="1.1" fill="#b0b0b0"/></svg>
<div class="a" style="left:7px;top:389.4px;width:6px;height:6px;background:#2b2b2b;border:1px solid #333"></div>
<div class="t" style="left:17px;top:387.9px;font-size:8px;color:#9c9c9c">建立</div>
<svg class="a" style="left:48px;top:387.9px" width="7" height="8"><path d="M3.5 0.5L6.5 3.5V7.5H0.5V3.5Z" fill="none" stroke="#b0b0b0" stroke-width="1.1" stroke-linejoin="round"/><circle cx="3.5" cy="5" r="1.1" fill="#b0b0b0"/></svg>
<div class="a" style="left:7px;top:400.1px;width:6px;height:6px;background:#2b2b2b;border:1px solid #333"></div>
<div class="t" style="left:17px;top:398.6px;font-size:8px;color:#9c9c9c">平滑</div>
<svg class="a" style="left:48px;top:398.6px" width="7" height="8"><path d="M3.5 0.5L6.5 3.5V7.5H0.5V3.5Z" fill="none" stroke="#b0b0b0" stroke-width="1.1" stroke-linejoin="round"/><circle cx="3.5" cy="5" r="1.1" fill="#b0b0b0"/></svg>
<div class="a" style="left:7px;top:410.8px;width:6px;height:6px;background:#2b2b2b;border:1px solid #333"></div>
<div class="t" style="left:17px;top:409.3px;font-size:8px;color:#9c9c9c">保护纹理</div>
<svg class="a" style="left:48px;top:409.3px" width="7" height="8"><path d="M3.5 0.5L6.5 3.5V7.5H0.5V3.5Z" fill="none" stroke="#b0b0b0" stroke-width="1.1" stroke-linejoin="round"/><circle cx="3.5" cy="5" r="1.1" fill="#b0b0b0"/></svg>
<div class="a" style="left:62px;top:263px;width:101px;height:59px;background:#363636;border:1px solid #2f2f2f"></div>
<div class="a" style="left:156px;top:264px;width:6px;height:57px;background:#303030"></div>
<div class="a" style="left:66.0px;top:265.0px;width:8px;height:8px;border-radius:50%;background:#5e5e5e;filter:blur(1.2px)"></div>
<div class="a" style="left:67.0px;top:275.0px;width:6px;height:2px;background:#4a4a4a"></div>
<div class="a" style="left:83.0px;top:265.0px;width:8px;height:8px;border-radius:50%;background:#6a6a6a;filter:blur(0.4px)"></div>
<div class="a" style="left:84.0px;top:275.0px;width:6px;height:2px;background:#4a4a4a"></div>
<div class="a" style="left:101.1px;top:267.5px;width:3px;height:3px;border-radius:50%;background:#777;filter:blur(0.2px)"></div>
<div class="a" style="left:99.6px;top:275.0px;width:6px;height:2px;background:#4a4a4a"></div>
<div class="a" style="left:117.8px;top:267.0px;width:4px;height:4px;border-radius:50%;background:#6a6a6a;filter:blur(0.3px)"></div>
<div class="a" style="left:116.8px;top:275.0px;width:6px;height:2px;background:#4a4a4a"></div>
<div class="a" style="left:131.9px;top:264.5px;width:9px;height:9px;border-radius:50%;background:#6a6a6a;filter:blur(0.5px)"></div>
<div class="a" style="left:133.4px;top:275.0px;width:6px;height:2px;background:#4a4a4a"></div>
<div class="a" style="left:66.0px;top:281.8px;width:8px;height:8px;border-radius:50%;background:#5c5c5c;filter:blur(0.7px)"></div>
<div class="a" style="left:67.0px;top:291.8px;width:6px;height:2px;background:#4a4a4a"></div>
<div class="a" style="left:83.0px;top:281.8px;width:8px;height:8px;border-radius:50%;background:#5e5e5e;filter:blur(0.7px)"></div>
<div class="a" style="left:84.0px;top:291.8px;width:6px;height:2px;background:#4a4a4a"></div>
<div class="a" style="left:95.6px;top:282.3px;width:14px;height:7px;border-radius:50%;background:#646464;filter:blur(0.4px)"></div>
<div class="a" style="left:99.6px;top:291.8px;width:6px;height:2px;background:#4a4a4a"></div>
<div class="a" style="left:117.8px;top:281.3px;width:4px;height:9px;border-radius:50%;background:#6a6a6a;filter:blur(0.4px)"></div>
<div class="a" style="left:116.8px;top:291.8px;width:6px;height:2px;background:#4a4a4a"></div>
<div class="a" style="left:132.4px;top:281.8px;width:8px;height:8px;border-radius:50%;background:#686868;filter:blur(0.5px)"></div>
<div class="a" style="left:133.4px;top:291.8px;width:6px;height:2px;background:#4a4a4a"></div>
<div class="a" style="left:64.5px;top:300.0px;width:11px;height:5px;border-radius:50%;background:#626262;filter:blur(0.5px)"></div>
<div class="a" style="left:67.0px;top:308.5px;width:6px;height:2px;background:#4a4a4a"></div>
<div class="a" style="left:82.0px;top:300.0px;width:10px;height:5px;border-radius:50%;background:#626262;filter:blur(0.5px)"></div>
<div class="a" style="left:84.0px;top:308.5px;width:6px;height:2px;background:#4a4a4a"></div>
<div class="a" style="left:100.1px;top:298.5px;width:5px;height:8px;border-radius:50%;background:#5e5e5e;filter:blur(0.4px)"></div>
<div class="a" style="left:99.6px;top:308.5px;width:6px;height:2px;background:#4a4a4a"></div>
<div class="a" style="left:115.3px;top:300.5px;width:9px;height:4px;border-radius:50%;background:#5e5e5e;filter:blur(0.6px)"></div>
<div class="a" style="left:116.8px;top:308.5px;width:6px;height:2px;background:#4a4a4a"></div>
<div class="a" style="left:133.9px;top:300.0px;width:5px;height:5px;border-radius:50%;background:#5a5a5a;filter:blur(0.6px)"></div>
<div class="a" style="left:133.4px;top:308.5px;width:6px;height:2px;background:#4a4a4a"></div>
<div class="a" style="left:66.0px;top:317.0px;width:8px;height:2px;border-radius:50%;background:#585858;filter:blur(0.5px)"></div>
<div class="a" style="left:81.5px;top:316.0px;width:11px;height:4px;border-radius:50%;background:#5e5e5e;filter:blur(0.5px)"></div>
<div class="a" style="left:115.8px;top:315.5px;width:8px;height:5px;border-radius:50%;background:#626262;filter:blur(0.5px)"></div>
<div class="a" style="left:131.9px;top:315.0px;width:9px;height:6px;border-radius:50%;background:#6a6a6a;filter:blur(0.4px)"></div>
<div class="t" style="left:62px;top:327px;font-size:8px;color:#aaa">大小</div>
<div class="a" style="left:133px;top:326px;width:30px;height:10px;background:#2d2d2d"></div>
<div class="a" style="left:62px;top:341px;width:101px;height:2px;background:#2c2c2c"></div>
<div class="a" style="left:63px;top:350px;width:6px;height:6px;background:#2b2b2b;border:1px solid #333"></div>
<div class="t" style="left:72px;top:348px;font-size:8px;color:#9c9c9c">翻转 X</div>
<div class="a" style="left:90px;top:350px;width:6px;height:6px;background:#2b2b2b;border:1px solid #333"></div>
<div class="t" style="left:98px;top:348px;font-size:8px;color:#9c9c9c">翻转 Y</div>
<div class="a" style="left:128px;top:349px;width:39px;height:41px;background:#363636;border:1px solid #4e4e4e"></div>
<svg class="a" style="left:128px;top:349px" width="39" height="41"><circle cx="19.5" cy="20.5" r="12.5" fill="none" stroke="#7a7a7a" stroke-width="1"/><path d="M9 22L30 19M18 10L21 31" stroke="#7a7a7a"/></svg>
<div class="t" style="left:72px;top:365px;font-size:8px;color:#9c9c9c">角度:</div>
<div class="a" style="left:90px;top:365px;width:27px;height:10px;background:#2d2d2d"></div>
<div class="t" style="left:72px;top:379px;font-size:8px;color:#9c9c9c">圆度:</div>
<div class="a" style="left:90px;top:379px;width:27px;height:10px;background:#2d2d2d"></div>
<div class="t" style="left:62px;top:391px;font-size:8px;color:#9c9c9c">硬度</div>
<div class="a" style="left:136px;top:391px;width:27px;height:10px;background:#2d2d2d"></div>
<div class="a" style="left:62px;top:405px;width:101px;height:2px;background:#2c2c2c"></div>
<div class="a" style="left:63px;top:416px;width:6px;height:6px;background:#2b2b2b;border:1px solid #333"></div>
<div class="t" style="left:72px;top:414px;font-size:8px;color:#9c9c9c">间距</div>
<div class="a" style="left:136px;top:414px;width:27px;height:10px;background:#2d2d2d"></div>
<div class="a" style="left:62px;top:428px;width:101px;height:1px;background:#2c2c2c"></div>
<div class="a" style="left:4px;top:460px;width:161px;height:52px;background:#3d3d3d;border:1px solid #2f2f2f"></div>
<div class="a" style="left:0;top:514px;width:168px;height:1px;background:#333"></div>
<svg class="a" style="left:129px;top:517px" width="30" height="10"><path d="M1 4C3 1 7 1 9 4C7 7 3 7 1 4Z" stroke="#bbb" fill="none"/><path d="M7 9L11 2" stroke="#bbb"/><rect x="18.5" y="1.5" width="6" height="6" fill="none" stroke="#bbb"/><path d="M18.5 4.5L21.5 1.5" stroke="#bbb"/></svg>
<!-- status bar -->
<div class="a" style="left:0;top:530px;width:990px;height:11px;background:#2f2f2f;border-top:1px solid #282828"></div>
<div class="t" style="left:6px;top:532px;font-size:7px;color:#ccc">50%</div>
<div class="a" style="left:24px;top:531px;width:1px;height:10px;background:#262626"></div>
<div class="t" style="left:43px;top:532px;font-size:6.5px;color:#bbb;letter-spacing:-.2px"><span style="font-size:8px;letter-spacing:0">文档</span>:5.93M/179.0M</div>
<svg class="a" style="left:113px;top:533px" width="6" height="8"><path d="M1.5 1L4.5 4L1.5 7" stroke="#bbb" fill="none"/></svg>

<!-- canvas -->
<div class="a" style="left:237px;top:155px;width:495px;height:278px;background:#bcbcbc;box-shadow:0 0 2px #111"></div>
<svg class="a" style="left:237px;top:155px" width="495" height="278" viewBox="237 155 495 278">
<defs>
<filter id="b1" filterUnits="userSpaceOnUse" x="237" y="155" width="495" height="278"><feGaussianBlur stdDeviation="1"/></filter>
<filter id="b2" filterUnits="userSpaceOnUse" x="237" y="155" width="495" height="278"><feGaussianBlur stdDeviation="2"/></filter>
<filter id="b4" filterUnits="userSpaceOnUse" x="237" y="155" width="495" height="278"><feGaussianBlur stdDeviation="4"/></filter>
<filter id="b7" filterUnits="userSpaceOnUse" x="237" y="155" width="495" height="278"><feGaussianBlur stdDeviation="7"/></filter>
<linearGradient id="rod" x1="0" y1="0" x2="0" y2="1"><stop offset="0" stop-color="#a8a8a8"/><stop offset=".35" stop-color="#f2f2f2"/><stop offset=".6" stop-color="#d4d4d4"/><stop offset="1" stop-color="#8a8a8a"/></linearGradient>
<linearGradient id="body" gradientUnits="userSpaceOnUse" x1="0" y1="198" x2="0" y2="300"><stop offset="0" stop-color="#a8a8a8"/><stop offset=".07" stop-color="#d2d2d2"/><stop offset=".2" stop-color="#c6c6c6"/><stop offset=".36" stop-color="#a8a8a8"/><stop offset=".48" stop-color="#9a9a9a"/><stop offset=".62" stop-color="#c2c2c2"/><stop offset=".8" stop-color="#cecece"/><stop offset="1" stop-color="#c4c4c4"/></linearGradient>
<linearGradient id="cyl" gradientUnits="userSpaceOnUse" x1="0" y1="204" x2="0" y2="244"><stop offset="0" stop-color="#9c9c9c"/><stop offset=".18" stop-color="#e2e2e2"/><stop offset=".45" stop-color="#cacaca"/><stop offset=".8" stop-color="#a2a2a2"/><stop offset="1" stop-color="#7e7e7e"/></linearGradient>
<linearGradient id="knob" gradientUnits="userSpaceOnUse" x1="0" y1="204" x2="0" y2="244"><stop offset="0" stop-color="#7a7a7a"/><stop offset=".2" stop-color="#b4b4b4"/><stop offset=".45" stop-color="#8c8c8c"/><stop offset=".55" stop-color="#6c6c6c"/><stop offset=".75" stop-color="#a8a8a8"/><stop offset="1" stop-color="#6a6a6a"/></linearGradient>
<radialGradient id="green" cx=".5" cy=".45" r=".5"><stop offset="0" stop-color="#c8f8c0"/><stop offset=".45" stop-color="#62d05e"/><stop offset=".85" stop-color="#2a8a30"/><stop offset="1" stop-color="#1c3a1c"/></radialGradient>
<linearGradient id="btn" x1="0" y1="0" x2="0" y2="1"><stop offset="0" stop-color="#a0a0a0"/><stop offset=".5" stop-color="#6e6e6e"/><stop offset="1" stop-color="#3a3a3a"/></linearGradient>
<clipPath id="silc"><path d="M389 210 C420 205 452 199 474 198 C482 199 487 205 490 214 L560 214 L560 244 C548 244 541 248 538 256 C533 266 512 270 502 277 C490 285 487 300 495 325 C505 350 517 372 515 386 C513 398 501 401 492 396 C481 390 476 380 472 368 C462 340 452 312 440 293 C432 288 416 290 402 292 L392 292 L388 245 Z"/></clipPath>
<clipPath id="webc"><path d="M424 296 L431 381 C445 377 460 373 473 369 L476 330 L450 296 Z"/></clipPath>
</defs>
<!-- rod shadow -->
<rect x="237" y="229" width="130" height="3" fill="#a8a8a8" filter="url(#b1)"/>
<!-- web -->
<g clip-path="url(#webc)">
<rect x="420" y="290" width="60" height="95" fill="#d0d0d0"/>
<path d="M428 296 L434 382" stroke="#9a9a9a" stroke-width="4" filter="url(#b2)"/>
<path d="M431 381 L473 369" stroke="#a8a8a8" stroke-width="2" filter="url(#b1)"/>
</g>
<!-- silhouette shading -->
<g clip-path="url(#silc)">
<rect x="385" y="195" width="180" height="210" fill="url(#body)"/>
<path d="M389 211 C420 206 452 200 474 199 C482 200 487 206 490 214" stroke="#8a8a8a" stroke-width="2.5" fill="none" filter="url(#b1)"/>
<path d="M390 244 V292" stroke="#8a8a8a" stroke-width="5" filter="url(#b2)"/>
<path d="M392 292 C420 288 432 288 440 293" stroke="#8e8e8e" stroke-width="6" fill="none" filter="url(#b4)"/>
<path d="M440 290 C454 314 465 342 476 370 C482 385 490 396 502 399" stroke="#767676" stroke-width="22" fill="none" filter="url(#b7)"/>
<path d="M470 292 C484 322 494 356 502 386" stroke="#e0e0e0" stroke-width="12" fill="none" filter="url(#b4)"/>
<path d="M497 283 C492 300 500 330 510 355 C516 372 518 385 512 395" stroke="#959595" stroke-width="8" fill="none" filter="url(#b4)"/>
<path d="M545 247 C535 262 512 268 500 278" stroke="#9a9a9a" stroke-width="5" fill="none" filter="url(#b2)"/>
<path d="M410 270 C440 266 470 268 530 256" stroke="#dedede" stroke-width="12" fill="none" filter="url(#b4)"/>
</g>
<!-- cylinder -->
<path d="M487 204 L545 204 L545 244 L487 244 C482 236 481 212 487 204 Z" fill="url(#cyl)"/>
<path d="M488 205 C483 214 483 235 488 243" stroke="#6e6e6e" stroke-width="2.5" fill="none" filter="url(#b1)"/>
<path d="M493 206 C489 214 489 235 493 242" stroke="#dcdcdc" stroke-width="2" fill="none" filter="url(#b1)"/>
<!-- knob -->
<rect x="237" y="220" width="128" height="8.5" fill="url(#rod)"/>
<rect x="362" y="215" width="5" height="18" rx="1.5" fill="#b4b4b4" stroke="#7e7e7e" stroke-width=".8"/>
<path d="M366 214 C366 207 372 205 378 205 C385 205 390 207 390 214 L390 235 C390 241 385 244 378 244 C372 244 366 241 366 235 Z" fill="#747474"/>
<path d="M368.5 213 C368.5 208.5 373 207.5 377.5 207.5 C382 207.5 385.5 208.5 385.5 213 L385.5 221 C381 224 373 224 368.5 221 Z" fill="#9a9a9a"/>
<path d="M368.5 221 C373 224 381 224 385.5 221" stroke="#c6c6c6" stroke-width="1.2" fill="none"/>
<path d="M368.5 228 C373 225.5 381 225.5 385.5 228 L385.5 236 C385.5 240 382 241.5 377.5 241.5 C373 241.5 368.5 240 368.5 236 Z" fill="#8e8e8e"/>
<path d="M368.5 228 C373 225.5 381 225.5 385.5 228" stroke="#b0b0b0" stroke-width="1" fill="none"/>
<rect x="385.5" y="206.5" width="4.5" height="36" rx="1.5" fill="#b8b8b8"/>
<path d="M385.7 207 V242" stroke="#6a6a6a" stroke-width="1"/>
<ellipse cx="400" cy="252" rx="11" ry="7" fill="#d6d6d6" filter="url(#b2)" opacity=".8"/>
<!-- text -->
<text x="398.5" y="226.5" font-size="10.5" font-family="Liberation Sans" fill="#4a4a4a" stroke="#4a4a4a" stroke-width=".25" letter-spacing=".3">Harmonice</text>
<text x="399" y="232.3" font-size="4.8" font-family="Liberation Sans" fill="#a8445e">ETHICON</text>
<text x="518.5" y="226.5" font-size="10.5" font-family="Liberation Sans" fill="#4a4a4a" stroke="#4a4a4a" stroke-width=".25" letter-spacing=".3">Harmo</text>
<text x="398" y="249" font-size="4" font-family="Liberation Sans" fill="#777">MAX</text>
<text x="398" y="271" font-size="4" font-family="Liberation Sans" fill="#777">MIN</text>
<text x="426" y="259" font-size="3.8" font-family="Liberation Sans" fill="#777">Adv</text>
<text x="426" y="265" font-size="3.8" font-family="Liberation Sans" fill="#777">hemostasis</text>
<!-- buttons -->
<ellipse cx="399" cy="261" rx="10.5" ry="5.2" fill="url(#btn)"/>
<ellipse cx="399" cy="259.5" rx="7" ry="2" fill="#b8b8b8" opacity=".5"/>
<ellipse cx="400" cy="280" rx="10.5" ry="5.5" fill="url(#btn)"/>
<ellipse cx="400" cy="278.5" rx="7" ry="2" fill="#b8b8b8" opacity=".5"/>
<ellipse cx="434" cy="277.5" rx="14" ry="7.5" fill="#222"/>
<ellipse cx="433.5" cy="277" rx="12" ry="6" fill="url(#green)"/>
<rect x="457" y="262.5" width="15" height="4.5" rx="2.2" fill="#5a5a5a"/>
<rect x="459" y="263.5" width="11" height="2" rx="1" fill="#aaa"/>
<!-- trigger -->
<path d="M379.0 356.3 L379.3 355.4 L379.8 354.1 L380.4 352.6 L381.0 351.0 L381.6 349.1 L382.3 347.2 L382.9 345.3 L383.5 343.4 L384.1 341.5 L384.7 339.4 L385.3 337.3 L385.9 335.1 L386.5 332.9 L387.0 330.7 L387.6 328.5 L388.1 326.4 L388.6 324.3 L389.0 322.2 L389.4 320.1 L389.8 318.1 L390.2 316.1 L390.7 314.2 L391.1 312.4 L391.6 310.7 L392.2 309.0 L392.7 307.4 L393.3 305.9 L393.9 304.5 L394.5 303.2 L395.1 302.0 L395.8 301.0 L396.6 300.1 L397.4 299.2 L398.4 298.4 L399.4 297.6 L400.6 296.9 L401.7 296.3 L402.8 295.7 L403.9 295.3 L404.9 295.0 L405.9 294.8 L406.9 294.7 L408.1 294.7 L409.2 294.8 L410.4 294.9 L411.6 295.2 L412.7 295.5 L413.7 295.9 L414.7 296.3 L415.7 296.7 L416.5 297.2 L417.3 297.8 L418.0 298.3 L418.7 299.0 L419.3 299.8 L419.8 300.7 L420.4 301.9 L420.9 303.2 L421.4 304.7 L421.8 306.4 L422.2 308.2 L422.5 310.1 L422.7 312.1 L422.9 314.2 L423.0 316.3 L422.9 318.7 L422.7 321.2 L422.5 323.8 L422.2 326.5 L421.9 329.2 L421.7 332.0 L421.4 334.7 L421.2 337.3 L420.9 339.8 L420.5 342.5 L420.2 345.1 L419.9 347.8 L419.6 350.5 L419.5 353.3 L419.5 356.0 L419.6 358.7 L419.8 361.3 L420.0 364.0 L420.3 366.6 L420.7 369.1 L421.1 371.6 L421.5 374.1 L421.9 376.5 L422.4 378.9 L422.9 381.4 L423.4 383.8 L424.0 386.2 L424.6 388.5 L425.2 390.7 L425.8 392.8 L426.3 394.7 L426.9 396.6 L427.5 398.5 L428.2 400.3 L428.8 402.0 L429.4 403.5 L429.9 404.8 L430.4 405.9 L430.7 406.8 L435.3 405.2 L435.0 404.3 L434.6 403.1 L434.2 401.8 L433.7 400.3 L433.2 398.6 L432.6 396.9 L432.1 395.1 L431.7 393.3 L431.2 391.3 L430.7 389.3 L430.2 387.1 L429.8 384.8 L429.3 382.5 L428.8 380.2 L428.4 377.8 L428.1 375.5 L427.8 373.1 L427.5 370.7 L427.2 368.3 L426.9 365.8 L426.7 363.4 L426.6 360.9 L426.5 358.4 L426.5 356.0 L426.6 353.6 L426.8 351.1 L427.1 348.6 L427.4 346.0 L427.7 343.4 L428.0 340.7 L428.3 338.0 L428.6 335.3 L428.8 332.7 L429.1 330.0 L429.4 327.2 L429.7 324.5 L429.9 321.7 L430.1 319.0 L430.2 316.3 L430.1 313.8 L429.9 311.4 L429.6 309.1 L429.3 306.9 L428.9 304.8 L428.3 302.7 L427.7 300.8 L427.0 299.0 L426.2 297.3 L425.2 295.7 L424.1 294.3 L422.9 293.1 L421.6 292.0 L420.3 291.1 L419.0 290.3 L417.6 289.7 L416.3 289.1 L414.8 288.6 L413.3 288.2 L411.7 287.8 L410.0 287.6 L408.3 287.5 L406.6 287.5 L404.8 287.7 L403.1 288.0 L401.4 288.5 L399.8 289.2 L398.2 290.0 L396.7 290.9 L395.2 292.0 L393.9 293.2 L392.6 294.5 L391.4 295.9 L390.4 297.4 L389.6 299.0 L388.9 300.7 L388.3 302.3 L387.7 304.0 L387.3 305.8 L386.8 307.5 L386.4 309.3 L386.0 311.2 L385.6 313.2 L385.3 315.2 L385.0 317.3 L384.8 319.4 L384.5 321.5 L384.2 323.5 L383.9 325.6 L383.5 327.7 L383.1 329.8 L382.7 332.0 L382.3 334.3 L381.8 336.5 L381.4 338.6 L380.9 340.7 L380.5 342.6 L380.0 344.5 L379.5 346.4 L379.0 348.3 L378.5 350.2 L378.1 351.9 L377.6 353.4 L377.3 354.7 L377.0 355.7 Z" fill="#8a8a8a"/>
<path d="M378.4 351.8 L378.9 350.1 L379.5 348.2 L380.1 346.3 L380.7 344.4 L381.2 342.5 L381.7 340.6 L382.2 338.5 L382.7 336.4 L383.3 334.2 L383.8 332.0 L384.3 329.8 L384.7 327.6 L385.2 325.5 L385.6 323.4 L386.0 321.3 L386.3 319.3 L386.6 317.2 L387.0 315.2 L387.3 313.2 L387.7 311.3 L388.2 309.5 L388.7 307.8 L389.2 306.1 L389.7 304.5 L390.3 302.9 L390.9 301.4 L391.6 300.0 L392.3 298.7 L393.2 297.5 L394.2 296.4 L395.3 295.3 L396.5 294.3 L397.8 293.4 L399.2 292.6 L400.5 292.0 L401.9 291.4 L403.2 291.0 L404.5 290.7 L405.9 290.6 L407.4 290.6 L408.8 290.7 L410.3 290.9 L411.6 291.2 L413.0 291.6 L414.2 292.0 L415.4 292.5 L416.5 293.0 L417.6 293.7 L418.7 294.4 L419.7 295.2 L420.6 296.1 L421.4 297.2 L422.2 298.5 L422.9 299.9 L423.5 301.5 L424.1 303.2 L424.5 305.1 L425.0 307.1 L425.3 309.1 L425.5 311.3 L425.7 313.5 L425.8 315.8 L425.7 318.3 L425.5 320.9 L425.3 323.6 L425.0 326.4 L424.7 329.1 L424.4 331.8 L424.2 334.5 L423.9 337.1 L423.6 339.8 L423.3 342.4 L423.0 345.1 L422.7 347.7 L422.4 350.3 L422.3 352.9 L422.2 355.5 L422.2 358.1 L422.4 360.6 L422.6 363.2 L422.8 365.7 L423.1 368.2 L423.5 370.7 L423.8 373.1 L424.2 375.5 L424.6 377.9 L425.1 380.3 L425.6 382.7 L426.1 385.0 L426.6 387.3 L427.2 389.5 L427.7 391.6 L428.2 393.5 L428.7 395.4 L429.3 397.2" stroke="#c4c4c4" stroke-width="1.6" fill="none" stroke-linecap="round" filter="url(#b1)"/>
</svg>
<!-- right panels -->
<div class="a" style="left:857px;top:46px;width:133px;height:485px;background:#2c2c2c"></div>
<div class="a" style="left:858px;top:46px;width:125px;height:305px;background:#353535"></div>
<div class="a" style="left:858px;top:46px;width:125px;height:8px;background:#2e2e2e"></div>
<div class="a" style="left:975px;top:45px;width:7px;height:5px;background:#777"></div>
<div class="a" style="left:858px;top:69px;width:125px;height:1px;background:#2a2a2a"></div>
<svg class="a" style="left:896px;top:62px" width="86" height="10">
<path d="M1 2L3 4L5 2" stroke="#888" fill="none"/>
<rect x="15" y="1" width="8" height="7" fill="none" stroke="#aaa"/><path d="M16 7L19 4L22 7" stroke="#aaa" fill="none"/>
<circle cx="32" cy="4.5" r="3.5" fill="none" stroke="#aaa"/><path d="M32 1V8A3.5 3.5 0 0 0 32 1" fill="#aaa"/>
<path d="M42 1.5H49M45.5 1.5V8.5" stroke="#bbb" stroke-width="1.4"/>
<rect x="54" y="1.5" width="6" height="6" fill="none" stroke="#aaa"/>
<rect x="67" y="1.5" width="7" height="6" rx="2" fill="none" stroke="#aaa"/>
<circle cx="83" cy="3" r="2.5" fill="#9a9a9a"/><rect x="82" y="5" width="2" height="4" fill="#555"/>
</svg>
<div class="a" style="left:861px;top:73px;width:60px;height:10px;background:#2a2a2a;border:1px solid #333"></div>
<div class="t" style="left:864px;top:73px;font-size:8px;color:#aaa">穿透</div>
<svg class="a" style="left:913px;top:76px" width="6" height="5"><path d="M0.5 1L3 3.5L5.5 1" stroke="#888" fill="none"/></svg>
<div class="t" style="left:925px;top:73px;font-size:7px;color:#999"><span style="font-size:7.5px">不透明度</span>:</div>
<div class="a" style="left:955px;top:73px;width:18px;height:10px;background:#2a2a2a"></div>
<div class="t" style="left:956px;top:74px;font-size:6px;color:#999">100%</div>
<div class="a" style="left:975px;top:73px;width:8px;height:10px;background:#2a2a2a"></div>
<svg class="a" style="left:976px;top:76px" width="6" height="5"><path d="M0.5 1L3 3.5L5.5 1" stroke="#888" fill="none"/></svg>
<div class="t" style="left:861px;top:87px;font-size:7.5px;color:#999">锁定:</div>
<svg class="a" style="left:878px;top:86px" width="56" height="11">
<rect x="1.5" y="2" width="6.5" height="6.5" fill="none" stroke="#aaa"/><rect x="3" y="3.5" width="1.5" height="1.5" fill="#aaa"/><rect x="5" y="5.5" width="1.5" height="1.5" fill="#aaa"/>
<path d="M13 9.5L19 2" stroke="#aaa" stroke-width="1.3"/>
<path d="M28 1V9.5M23.5 5.3H32.5" stroke="#aaa"/>
<path d="M36 3H42V9M38 9H36V5" stroke="#aaa" fill="none"/>
<rect x="47" y="4.5" width="6" height="5" fill="#bbb"/><path d="M48.5 4.5V3A1.5 1.5 0 0 1 51.5 3V4.5" stroke="#bbb" fill="none"/>
</svg>
<div class="t" style="left:937px;top:87px;font-size:7.5px;color:#999">填充:</div>
<div class="a" style="left:955px;top:86px;width:18px;height:10px;background:#2a2a2a"></div>
<div class="t" style="left:956px;top:87px;font-size:6px;color:#999">100%</div>
<div class="a" style="left:975px;top:86px;width:8px;height:10px;background:#2a2a2a"></div>
<svg class="a" style="left:976px;top:89px" width="6" height="5"><path d="M0.5 1L3 3.5L5.5 1" stroke="#888" fill="none"/></svg>
<div class="a" style="left:858px;top:99px;width:125px;height:1px;background:#2a2a2a"></div>
<div class="a" style="left:858px;top:100px;width:118px;height:238px;background:#383838"></div>
<div class="a" style="left:976px;top:100px;width:7px;height:238px;background:#303030"></div>
<div class="a" style="left:858px;top:120px;width:118px;height:1px;background:#303030"></div>
<div class="a" style="left:863px;top:106px;width:7px;height:7px;border:1px solid #555"></div>
<div class="a" style="left:876px;top:105px;width:16px;height:11px;background:#f4f4f4"></div>
<div class="a" style="left:886px;top:109px;width:6px;height:7px;background:#333;border:1px solid #eee"></div>
<div class="t" style="left:897px;top:105px;font-size:7px;color:#ccc">1</div>
<svg class="a" style="left:960px;top:105px" width="9" height="10"><path d="M4.5 1L8 4.5V9H1V4.5Z" fill="none" stroke="#ccc" stroke-width="1.2"/><circle cx="4.5" cy="6" r="1.2" fill="#ccc"/></svg>
<div class="a" style="left:952px;top:154px;width:24px;height:11px;background:#474747"></div>
<div class="t" style="left:957px;top:155px;font-size:8.5px;color:#ddd;font-style:italic;font-family:'Liberation Serif',serif">fx</div>
<svg class="a" style="left:966px;top:157px" width="7" height="5"><path d="M1 4L3.5 1.5L6 4" stroke="#aaa" fill="none"/></svg>
<svg class="a" style="left:961px;top:190px" width="9" height="10"><rect x="1.5" y="4.5" width="6" height="5" fill="#ddd"/><path d="M3 4.5V3A1.5 1.5 0 0 1 6 3V4.5" stroke="#ddd" fill="none"/></svg>
<svg class="a" style="left:960px;top:210px" width="9" height="10"><path d="M4.5 1L8 4.5V9H1V4.5Z" fill="none" stroke="#ccc" stroke-width="1.2"/><circle cx="4.5" cy="6" r="1.2" fill="#ccc"/></svg>
<div class="a" style="left:858px;top:337px;width:125px;height:12px;background:#3b3b3b;border-top:1px solid #2c2c2c"></div>
<svg class="a" style="left:950px;top:338px" width="22" height="10"><rect x="1.5" y="1.5" width="6" height="6" fill="none" stroke="#aaa"/><path d="M12.5 2.5H19.5M14.5 2.5V1.5H17.5V2.5M13.5 3.5V8.5H18.5V3.5" stroke="#aaa" fill="none"/></svg>
<div class="a" style="left:858px;top:349px;width:125px;height:2px;background:#2a2a2a"></div><div class="a" style="left:858px;top:351px;width:125px;height:14px;background:#333"></div><div class="a" style="left:952px;top:365px;width:23px;height:14px;background:#3b3b3b"></div>
<div class="a" style="left:975px;top:355px;width:7px;height:5px;background:#777"></div>
<div class="a" style="left:858px;top:365px;width:125px;height:92px;background:#353535"></div>
<div class="a" style="left:858px;top:446px;width:125px;height:11px;background:#3b3b3b;border-top:1px solid #2c2c2c"></div>
<svg class="a" style="left:876px;top:446px" width="96" height="11">
<circle cx="6" cy="5.5" r="2.8" fill="#bbb"/>
<circle cx="20" cy="5.5" r="2.8" fill="none" stroke="#aaa"/>
<circle cx="34" cy="5.5" r="3" fill="none" stroke="#aaa" stroke-dasharray="1 1"/>
<path d="M47 2L50.5 5.5L47 9L43.5 5.5Z" fill="none" stroke="#bbb"/>
<rect x="57.5" y="2.5" width="8" height="6" fill="#bbb"/><circle cx="61.5" cy="5.5" r="1.7" fill="#353535"/>
<rect x="73.5" y="2.5" width="6" height="6" fill="none" stroke="#aaa"/>
<path d="M85.5 3H92.5M87.5 3V2H90.5V3M86.5 4V9H91.5V4" stroke="#aaa" fill="none"/>
</svg>
<div class="a" style="left:858px;top:457px;width:125px;height:5px;background:#333"></div><div class="a" style="left:976px;top:365px;width:7px;height:81px;background:#303030"></div>
<div class="a" style="left:858px;top:462px;width:103px;height:69px;background:#252525"></div>
<div class="a" style="left:961px;top:462px;width:29px;height:69px;background:#333"></div>
<div class="a" style="left:970px;top:462px;width:1px;height:69px;background:#2a2a2a"></div>
<!-- dialog -->
<div class="a" style="left:543px;top:124px;width:410px;height:270px;background:#35597c"></div>
<div class="a" style="left:544px;top:125px;width:408px;height:268px;background:#3c3c3c"></div>
<div class="a" style="left:544px;top:125px;width:408px;height:16px;background:#1a73d1"></div>
<div class="t" style="left:548px;top:128px;font-size:8px;color:#f0f0f0">图层样式</div>
<svg class="a" style="left:938px;top:128px" width="10" height="10"><path d="M1.5 1.5L8.5 8.5M8.5 1.5L1.5 8.5" stroke="#e8f0ff" stroke-width="1.2"/></svg>
<!-- left list -->
<div class="a" style="left:549px;top:147px;width:111px;height:226px;background:#383838;border:1px solid #333"></div>
<div class="a" style="left:660px;top:147px;width:8px;height:226px;background:#303030"></div>

<div class="a" style="left:550px;top:161.1px;width:109px;height:1px;background:#333"></div>
<div class="t" style="left:555px;top:151.5px;font-size:8px;color:#b4b4b4">样式</div>
<div class="a" style="left:550px;top:174.6px;width:109px;height:1px;background:#333"></div>
<div class="t" style="left:555px;top:165.1px;font-size:8px;color:#b4b4b4">混合选项</div>
<div class="a" style="left:550px;top:188.2px;width:109px;height:1px;background:#333"></div>
<div class="a" style="left:554px;top:179.1px;width:7px;height:7px;border:1px solid #5a5a5a;border-radius:1px"></div>
<div class="t" style="left:564px;top:178.6px;font-size:8px;color:#b4b4b4">斜面和浮雕</div>
<div class="a" style="left:550px;top:201.7px;width:109px;height:1px;background:#333"></div>
<div class="a" style="left:559px;top:192.7px;width:7px;height:7px;border:1px solid #5a5a5a;border-radius:1px"></div>
<div class="t" style="left:568px;top:192.2px;font-size:8px;color:#b4b4b4">等高线</div>
<div class="a" style="left:550px;top:215.2px;width:109px;height:1px;background:#333"></div>
<div class="a" style="left:559px;top:206.2px;width:7px;height:7px;border:1px solid #5a5a5a;border-radius:1px"></div>
<div class="t" style="left:568px;top:205.7px;font-size:8px;color:#b4b4b4">纹理</div>
<div class="a" style="left:550px;top:228.8px;width:109px;height:1px;background:#333"></div>
<div class="a" style="left:554px;top:219.8px;width:7px;height:7px;border:1px solid #5a5a5a;border-radius:1px"></div>
<div class="t" style="left:564px;top:219.2px;font-size:8px;color:#b4b4b4">描边</div>
<div class="a" style="left:649px;top:219.2px;width:8px;height:8px;background:#4a4a4a;border:1px solid #dcdcdc;border-radius:1px"></div><svg class="a" style="left:649px;top:219.2px" width="8" height="8"><path d="M4 1.5V6.5M1.5 4H6.5" stroke="#eee" stroke-width="1.4"/></svg>
<div class="a" style="left:550px;top:242.4px;width:109px;height:1px;background:#333"></div>
<div class="a" style="left:554px;top:233.3px;width:7px;height:7px;border:1px solid #5a5a5a;border-radius:1px"></div>
<div class="t" style="left:564px;top:232.8px;font-size:8px;color:#b4b4b4">内阴影</div>
<div class="a" style="left:649px;top:232.8px;width:8px;height:8px;background:#4a4a4a;border:1px solid #dcdcdc;border-radius:1px"></div><svg class="a" style="left:649px;top:232.8px" width="8" height="8"><path d="M4 1.5V6.5M1.5 4H6.5" stroke="#eee" stroke-width="1.4"/></svg>
<div class="a" style="left:550px;top:243.4px;width:109px;height:13.6px;background:#4a4a4a"></div>
<div class="a" style="left:550px;top:255.9px;width:109px;height:1px;background:#333"></div>
<div class="a" style="left:554px;top:246.9px;width:7px;height:7px;background:#e6e6e6;border-radius:1px"></div><svg class="a" style="left:554px;top:246.9px" width="7" height="7"><path d="M1.3 3.5L3 5.2L5.8 1.8" stroke="#333" stroke-width="1.2" fill="none"/></svg>
<div class="t" style="left:564px;top:246.4px;font-size:8px;color:#e0e0e0">内发光</div>
<div class="a" style="left:550px;top:269.4px;width:109px;height:1px;background:#333"></div>
<div class="a" style="left:554px;top:260.4px;width:7px;height:7px;border:1px solid #5a5a5a;border-radius:1px"></div>
<div class="t" style="left:564px;top:259.9px;font-size:8px;color:#b4b4b4">光泽</div>
<div class="a" style="left:550px;top:283.0px;width:109px;height:1px;background:#333"></div>
<div class="a" style="left:554px;top:273.9px;width:7px;height:7px;border:1px solid #5a5a5a;border-radius:1px"></div>
<div class="t" style="left:564px;top:273.4px;font-size:8px;color:#b4b4b4">颜色叠加</div>
<div class="a" style="left:649px;top:273.4px;width:8px;height:8px;background:#4a4a4a;border:1px solid #dcdcdc;border-radius:1px"></div><svg class="a" style="left:649px;top:273.4px" width="8" height="8"><path d="M4 1.5V6.5M1.5 4H6.5" stroke="#eee" stroke-width="1.4"/></svg>
<div class="a" style="left:550px;top:296.6px;width:109px;height:1px;background:#333"></div>
<div class="a" style="left:554px;top:287.5px;width:7px;height:7px;border:1px solid #5a5a5a;border-radius:1px"></div>
<div class="t" style="left:564px;top:287.0px;font-size:8px;color:#b4b4b4">渐变叠加</div>
<div class="a" style="left:649px;top:287.0px;width:8px;height:8px;background:#4a4a4a;border:1px solid #dcdcdc;border-radius:1px"></div><svg class="a" style="left:649px;top:287.0px" width="8" height="8"><path d="M4 1.5V6.5M1.5 4H6.5" stroke="#eee" stroke-width="1.4"/></svg>
<div class="a" style="left:550px;top:310.1px;width:109px;height:1px;background:#333"></div>
<div class="a" style="left:554px;top:301.1px;width:7px;height:7px;border:1px solid #5a5a5a;border-radius:1px"></div>
<div class="t" style="left:564px;top:300.6px;font-size:8px;color:#b4b4b4">图案叠加</div>
<div class="a" style="left:550px;top:323.7px;width:109px;height:1px;background:#333"></div>
<div class="a" style="left:554px;top:314.6px;width:7px;height:7px;border:1px solid #5a5a5a;border-radius:1px"></div>
<div class="t" style="left:564px;top:314.1px;font-size:8px;color:#b4b4b4">外发光</div>
<div class="a" style="left:550px;top:337.2px;width:109px;height:1px;background:#333"></div>
<div class="a" style="left:554px;top:328.1px;width:7px;height:7px;border:1px solid #5a5a5a;border-radius:1px"></div>
<div class="t" style="left:564px;top:327.6px;font-size:8px;color:#b4b4b4">投影</div>
<div class="a" style="left:649px;top:327.6px;width:8px;height:8px;background:#4a4a4a;border:1px solid #dcdcdc;border-radius:1px"></div><svg class="a" style="left:649px;top:327.6px" width="8" height="8"><path d="M4 1.5V6.5M1.5 4H6.5" stroke="#eee" stroke-width="1.4"/></svg>
<div class="a" style="left:549px;top:373px;width:111px;height:1px;background:#333"></div>
<div class="t" style="left:556px;top:375px;font-size:9px;color:#ddd;font-style:italic;font-family:'Liberation Serif',serif">fx</div>
<div class="a" style="left:565px;top:383px;width:2px;height:2px;background:#ddd"></div>
<svg class="a" style="left:570px;top:376px" width="26" height="8"><path d="M4 1L1 4H3V7H5V4H7Z" fill="#8a8a8a"/><path d="M18 7L15 4H17V1H19V4H21Z" fill="#8a8a8a"/></svg>
<svg class="a" style="left:655px;top:375px" width="8" height="9"><path d="M0.5 2H7.5M2.5 2V1H5.5V2" stroke="#9a9a9a" fill="none"/><rect x="1.5" y="3" width="5" height="5.5" fill="none" stroke="#9a9a9a"/><path d="M3 4V7.5M5 4V7.5" stroke="#9a9a9a"/></svg>

<div class="a" style="left:676px;top:147px;width:195px;height:240px;border:1px solid #333;background:#3c3c3c"></div>
<div class="t" style="left:687px;top:146px;font-size:8px;color:#d6d6d6">内发光</div>
<div class="a" style="left:682px;top:154px;width:182px;height:71px;border:1px solid #343434"></div>
<div class="t" style="left:692px;top:155px;font-size:8px;color:#cfcfcf">结构</div>
<div class="a" style="left:682px;top:227px;width:182px;height:61px;border:1px solid #343434"></div>
<div class="t" style="left:692px;top:226px;font-size:8px;color:#cfcfcf">图素</div>
<div class="a" style="left:682px;top:291px;width:182px;height:58px;border:1px solid #343434"></div>
<div class="t" style="left:692px;top:291px;font-size:8px;color:#cfcfcf">品质</div>

<div class="t" style="right:261px;top:169px;font-size:8px;color:#b8b8b8">混合模式:</div>
<div class="a" style="left:731px;top:169px;width:68px;height:9px;background:#303030;border:1px solid #474747"></div><div class="t" style="left:735px;top:169px;font-size:8px;color:#ddd">滤色</div><svg class="a" style="left:790px;top:171px" width="6" height="5"><path d="M0.5 1L3 3.5L5.5 1" stroke="#aaa" fill="none"/></svg>
<div class="t" style="right:262px;top:181px;font-size:8px;color:#b8b8b8">不透明度(O):</div>
<div class="a" style="left:733px;top:183px;width:50px;height:1px;background:#5a5a5a"></div><svg class="a" style="left:752px;top:183px" width="8" height="6"><path d="M4 0.5L7.5 5.5H0.5Z" fill="#f0f0f0"/></svg>
<div class="a" style="left:787px;top:180px;width:22px;height:11px;background:#2e2e2e"></div><div class="t" style="left:790px;top:181px;font-size:7px;color:#d0d0d0">45</div>
<div class="t" style="left:813px;top:181px;font-size:7px;color:#bbb">%</div>
<div class="t" style="right:262px;top:193px;font-size:8px;color:#b8b8b8">杂色(N):</div>
<div class="a" style="left:733px;top:195px;width:50px;height:1px;background:#5a5a5a"></div><svg class="a" style="left:729px;top:195px" width="8" height="6"><path d="M4 0.5L7.5 5.5H0.5Z" fill="#f0f0f0"/></svg>
<div class="a" style="left:787px;top:192px;width:22px;height:11px;background:#2e2e2e"></div><div class="t" style="left:790px;top:193px;font-size:7px;color:#d0d0d0">0</div>
<div class="t" style="left:813px;top:193px;font-size:7px;color:#bbb">%</div>
<div class="a" style="left:699px;top:208px;width:8px;height:8px;border-radius:50%;background:#eee"></div><div class="a" style="left:701.5px;top:210.5px;width:3px;height:3px;border-radius:50%;background:#333"></div>
<div class="a" style="left:711px;top:206px;width:13px;height:13px;background:#b5b5b5;border:1px solid #999"></div>
<div class="a" style="left:730px;top:208px;width:8px;height:8px;border-radius:50%;border:1px solid #777"></div>
<div class="a" style="left:742px;top:206px;width:56px;height:13px;background-color:#ddd;background-image:linear-gradient(90deg,#d8d8d8 0%,rgba(216,216,216,0) 100%),repeating-conic-gradient(#ffffff 0 25%,#cfcfcf 0 50%);background-size:100% 100%,4px 4px;border:1px solid #888"></div>
<div class="a" style="left:798px;top:206px;width:8px;height:13px;background:#2e2e2e;border:1px solid #474747"></div><svg class="a" style="left:799px;top:211px" width="6" height="5"><path d="M0.5 1L3 3.5L5.5 1" stroke="#aaa" fill="none"/></svg>
<div class="t" style="right:262px;top:240px;font-size:8px;color:#b8b8b8">方法:</div>
<div class="a" style="left:731px;top:240px;width:29px;height:10px;background:#303030;border:1px solid #474747"></div><div class="t" style="left:734px;top:240px;font-size:8px;color:#ddd">柔和</div><svg class="a" style="left:752px;top:243px" width="6" height="5"><path d="M0.5 1L3 3.5L5.5 1" stroke="#aaa" fill="none"/></svg>
<div class="t" style="right:257px;top:252px;font-size:8px;color:#b8b8b8">源:</div>
<div class="a" style="left:734px;top:253px;width:8px;height:8px;border-radius:50%;border:1px solid #888"></div><div class="t" style="left:744px;top:252px;font-size:8px;color:#bbb">居中<span style="font-size:7px">(E)</span></div>
<div class="a" style="left:773px;top:253px;width:8px;height:8px;border-radius:50%;background:#eee"></div><div class="a" style="left:775.5px;top:255.5px;width:3px;height:3px;border-radius:50%;background:#333"></div><div class="t" style="left:784px;top:252px;font-size:8px;color:#ccc">边缘<span style="font-size:7px">(G)</span></div>
<div class="t" style="right:264px;top:264px;font-size:8px;color:#b8b8b8">阻塞(C):</div>
<div class="a" style="left:733px;top:266px;width:50px;height:1px;background:#5a5a5a"></div><svg class="a" style="left:729px;top:266px" width="8" height="6"><path d="M4 0.5L7.5 5.5H0.5Z" fill="#f0f0f0"/></svg>
<div class="a" style="left:787px;top:263px;width:22px;height:11px;background:#2e2e2e"></div><div class="t" style="left:790px;top:264px;font-size:7px;color:#d0d0d0">0</div>
<div class="t" style="left:814px;top:264px;font-size:7px;color:#bbb">%</div>
<div class="t" style="right:264px;top:276px;font-size:8px;color:#b8b8b8">大小(S):</div>
<div class="a" style="left:733px;top:278px;width:50px;height:1px;background:#5a5a5a"></div><svg class="a" style="left:739px;top:278px" width="8" height="6"><path d="M4 0.5L7.5 5.5H0.5Z" fill="#f0f0f0"/></svg>
<div class="a" style="left:787px;top:275px;width:22px;height:11px;background:#2e2e2e;border:1px solid #2f6fb5"></div><div class="a" style="left:788px;top:277px;width:9px;height:7px;background:#3a86d8"></div><div class="t" style="left:789px;top:276px;font-size:7px;color:#fff">38</div>
<div class="t" style="left:815px;top:276px;font-size:8px;color:#bbb">像素</div>
<div class="t" style="right:265px;top:308px;font-size:8px;color:#b8b8b8">等高线:</div>
<div class="a" style="left:730px;top:304px;width:20px;height:18px;background:#2a2a2a;border:1px solid #555"></div><svg class="a" style="left:731px;top:305px" width="18" height="16"><path d="M0 0H18L0 16Z" fill="#f2f2f2"/></svg>
<div class="a" style="left:750px;top:304px;width:6px;height:18px;background:#2e2e2e;border:1px solid #444"></div><svg class="a" style="left:750px;top:311px" width="6" height="5"><path d="M0.8 1L3 3L5.2 1" stroke="#999" fill="none"/></svg>
<div class="a" style="left:763px;top:310px;width:7px;height:7px;border:1px solid #666;border-radius:1px"></div><div class="t" style="left:773px;top:308px;font-size:8px;color:#bbb">消除锯齿<span style="font-size:7px">(L)</span></div>
<div class="t" style="right:265px;top:326px;font-size:8px;color:#b8b8b8">范围(R):</div>
<div class="a" style="left:733px;top:328px;width:50px;height:1px;background:#5a5a5a"></div><svg class="a" style="left:754px;top:328px" width="8" height="6"><path d="M4 0.5L7.5 5.5H0.5Z" fill="#f0f0f0"/></svg>
<div class="a" style="left:787px;top:325px;width:22px;height:11px;background:#2e2e2e"></div><div class="t" style="left:790px;top:326px;font-size:7px;color:#d0d0d0">50</div>
<div class="t" style="left:814px;top:326px;font-size:7px;color:#bbb">%</div>
<div class="t" style="right:265px;top:337px;font-size:8px;color:#b8b8b8">抖动(J):</div>
<div class="a" style="left:733px;top:339px;width:50px;height:1px;background:#5a5a5a"></div><svg class="a" style="left:729px;top:339px" width="8" height="6"><path d="M4 0.5L7.5 5.5H0.5Z" fill="#f0f0f0"/></svg>
<div class="a" style="left:787px;top:336px;width:22px;height:11px;background:#2e2e2e"></div><div class="t" style="left:790px;top:337px;font-size:7px;color:#d0d0d0">0</div>
<div class="t" style="left:814px;top:337px;font-size:7px;color:#bbb">%</div>
<div class="a" style="left:720px;top:353px;width:51px;height:11px;background:#313131;border:1px solid #474747;border-radius:1px"></div><div class="t" style="left:726px;top:354px;font-size:8px;color:#ccc">设置为默认值</div>
<div class="a" style="left:776px;top:353px;width:51px;height:11px;background:#313131;border:1px solid #474747;border-radius:1px"></div><div class="t" style="left:782px;top:354px;font-size:8px;color:#ccc">复位为默认值</div>
<div class="a" style="left:878px;top:148px;width:68px;height:14px;border:1.5px solid #c8c8c8;border-radius:7px;background:#3c3c3c"></div><div class="t" style="left:904px;top:150px;font-size:8px;color:#e6e6e6">确定</div>
<div class="a" style="left:878px;top:166px;width:68px;height:14px;border:1px solid #707070;border-radius:7px"></div><div class="t" style="left:904px;top:168px;font-size:8px;color:#cfcfcf">取消</div>
<div class="a" style="left:878px;top:184px;width:68px;height:14px;border:1px solid #707070;border-radius:7px"></div><div class="t" style="left:887px;top:186px;font-size:8px;color:#cfcfcf">新建样式<span style="font-size:7px">(W)...</span></div>
<div class="a" style="left:893px;top:204px;width:7px;height:7px;background:#e6e6e6;border-radius:1px"></div><svg class="a" style="left:893px;top:204px" width="7" height="7"><path d="M1.3 3.5L3 5.2L5.8 1.8" stroke="#333" stroke-width="1.2" fill="none"/></svg><div class="t" style="left:903px;top:203px;font-size:8px;color:#cfcfcf">预览<span style="font-size:7px">(V)</span></div>
<div class="a" style="left:878px;top:216px;width:68px;height:67px;background:#353535"></div>
<div class="a" style="left:895px;top:232px;width:34px;height:35px;background:#747474;border:1px solid #bdbdbd;box-shadow:inset 0 0 3px 1px #c4c4c4"></div>
<!-- overlays -->
<svg class="a" style="left:0;top:0" width="990" height="541">
<path d="M763.0 242.1 L747.8 221.1 L751.0 218.6 L737.5 211.5 L741.6 226.2 L744.7 223.7 L762.0 242.9 Z" fill="#ee1c1c"/>
<path d="M739.4 310.0 L772.6 283.6 L775.2 286.6 L782.0 273.0 L767.4 277.5 L770.0 280.5 L738.6 309.0 Z" fill="#ee1c1c"/>
<path d="M741.5 277.5 V287.5 L743.8 285.3 L745.6 289 L747.3 288.2 L745.6 284.6 H748.8 Z" fill="#fff" stroke="#111" stroke-width=".8"/>
</svg>
<!-- watermark -->
<svg class="a" style="left:0;top:0" width="990" height="541">
<g stroke="#9a9a9a" stroke-opacity=".78" stroke-width="2.8" fill="none" stroke-linecap="round" stroke-linejoin="round">
<path d="M760.5 28.5 C766 27.5 769 31 769 37 V55 C769 62 773 66 781 66"/>
<rect x="777" y="27" width="52" height="39" rx="7"/>
<path d="M791 32 H815 M791 38.5 H815 M803 32 V38.5"/>
<path d="M778 49 H784 M778 55 H784 M822 49 H828 M822 55 H828"/>
<path d="M851.6 22 V29 M852 24 H871 M835 66 V34 C835 31.5 836.5 30 839 30 H873.5 M840.5 37.7 H873 M846.5 34 V42 M862 35 V43 H874 M843 51 H857 M845.5 51 C845.5 58 844.5 62 843 66 M862 51 V60 C862 64 865 66 869 66 H875"/>
<path d="M883 23 V29.5 M877.5 36 H884 V60 C884 64 886 66 890 66"/>
<rect x="895.4" y="22.8" width="24.4" height="22.2" rx="3"/>
<path d="M907.5 23 V66 M895.5 34 H919.8 M893 51 H921 M904 55 L896 64 M911 55 L920 64"/>
<path d="M929 65 V28 C929 24 931 22 935 22 H961 C965 22 967 24 967 28 V62 C967 64.5 965.5 66 962.5 66"/>
<path d="M934.5 31 L947.5 57 M947 31 L934.5 57 M951 31 L963.5 57 M963 31 L951 57"/>
</g>
<g fill="#9a9a9a" fill-opacity=".78">
<path d="M783 28 L788 20.5 L793 28 Z M813 28 L818 20.5 L823 28 Z"/>
<path d="M799 45 L809.5 51 L799 57 Z"/>
</g>
</svg>
</body></html>
